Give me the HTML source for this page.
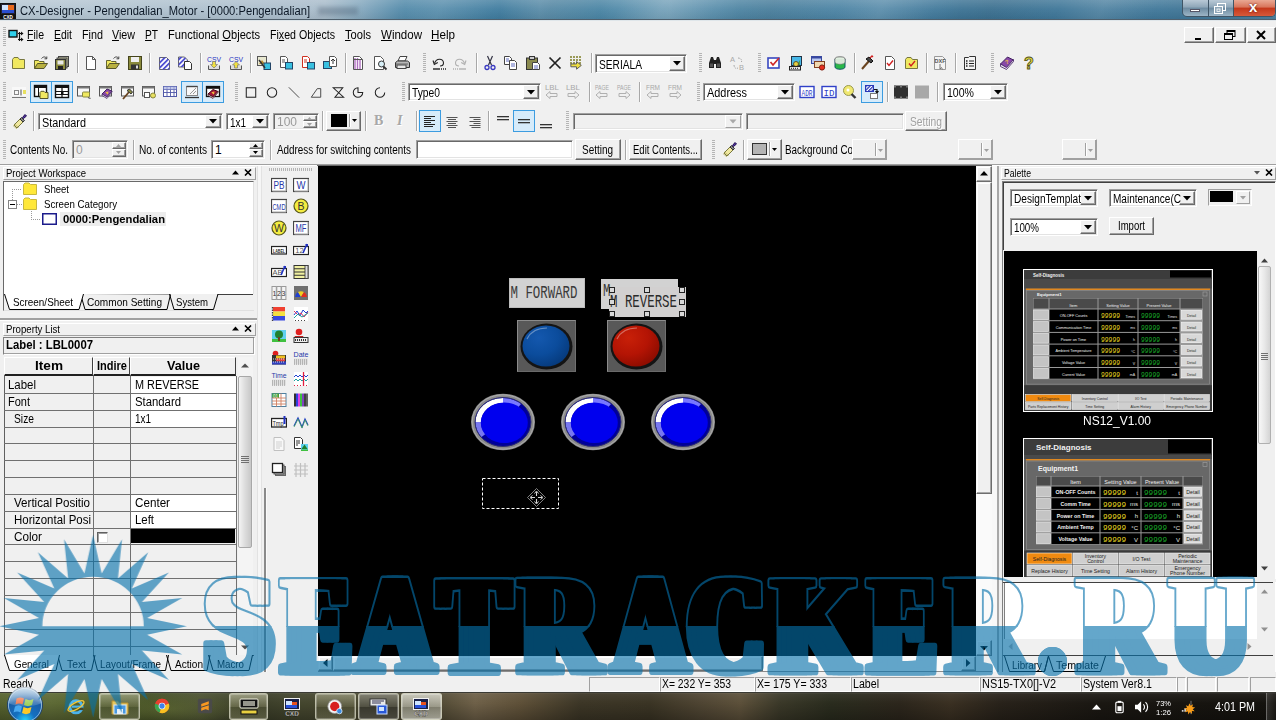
<!DOCTYPE html>
<html><head><meta charset="utf-8"><title>CX-Designer - Pengendalian_Motor</title>
<style>
html,body{margin:0;padding:0;}
body{width:1276px;height:720px;overflow:hidden;position:relative;background:#f0f0f0;font-family:"Liberation Sans",sans-serif;font-size:11px;}
div,svg,span.t{position:absolute;box-sizing:border-box;}
span.t{white-space:nowrap;transform-origin:0 50%;}
u{text-decoration:underline;text-underline-offset:1px;}
.sunk{border:1px solid;border-color:#a0a0a0 #fff #fff #a0a0a0;}
.sunk2{border:1px solid;border-color:#a0a0a0 #fff #fff #a0a0a0;box-shadow:inset 1px 1px 0 #696969,inset -1px -1px 0 #e3e3e3;}
.raised{border:1px solid;border-color:#fff #a0a0a0 #a0a0a0 #fff;background:#f0f0f0;}
.btn{border:1px solid;border-color:#fff #696969 #696969 #fff;box-shadow:inset -1px -1px 0 #a0a0a0;background:#f0f0f0;}
.hl{border:1px solid #3c9ce0;background:#d6ebfa;}
.sep{width:1px;background:#a8a8a8;box-shadow:1px 0 0 #fff;}
.grip{width:3px;background:repeating-linear-gradient(to bottom,#b4b4b4 0,#b4b4b4 1px,transparent 1px,transparent 2px);}
.gripH{height:3px;background:repeating-linear-gradient(to right,#b4b4b4 0,#b4b4b4 1px,transparent 1px,transparent 2px);}

</style></head>
<body>
<!-- title bar -->
<div style="left:0px;top:0px;width:1276px;height:20px;background:linear-gradient(to right,#b7c8d4 0,#a9bccb 325px,#86a9bf 360px,#4f88a8 405px,#3f7c9f 500px,#5f93b0 540px,#4a86a6 600px,#6a9ab4 670px,#4f87a6 740px,#4a82a3 880px,#3d7597 960px,#3f7799 1180px,#4c7f9e 1276px);"></div>
<div style="left:0px;top:0px;width:1276px;height:20px;background:linear-gradient(to bottom,rgba(255,255,255,.18) 0,rgba(255,255,255,.05) 45%,rgba(0,0,0,.06) 100%);"></div>
<div style="left:400px;top:0px;width:780px;height:20px;background:repeating-linear-gradient(115deg,rgba(255,255,255,0) 0,rgba(255,255,255,.10) 40px,rgba(255,255,255,0) 90px,rgba(0,0,0,.05) 140px,rgba(255,255,255,0) 200px);"></div>
<div style="left:0px;top:19px;width:1276px;height:1px;background:#4f5f6c;"></div>
<div style="left:0px;top:20px;width:1276px;height:1px;background:#dfe6ea;"></div>
<div style="left:318px;top:7px;width:40px;height:8px;background:rgba(70,90,110,.35);filter:blur(2px);"></div>
<svg style="left:0px;top:3px;" width="16" height="16" viewBox="0 0 16 16"><rect x="0.5" y="0.5" width="15" height="11" fill="#223" stroke="#111"/><rect x="2" y="2" width="6" height="5" fill="#cfe4ff"/><rect x="8" y="2" width="6" height="5" fill="#e96a1c"/><rect x="2" y="7" width="12" height="3" fill="#2b4fd0"/><rect x="0" y="12" width="16" height="4" fill="#111"/><text x="8" y="15.6" font-size="4.6" font-weight="bold" fill="#fff" text-anchor="middle" font-family="Liberation Sans,sans-serif">CXD</text></svg>
<span class="t" style="left:20px;top:2.5px;font-size:12px;line-height:16px;color:#0c1826;transform:scaleX(0.9330);">CX-Designer - Pengendalian_Motor - [0000:Pengendalian]</span>
<div style="left:1182px;top:0px;width:94px;height:17px;border-radius:0 0 5px 5px;border:1px solid #3f5566;border-top:none;background:linear-gradient(to bottom,#b9c9d6 0,#8ea6b8 45%,#6c8aa0 50%,#9db5c6 100%);"></div>
<div style="left:1208px;top:0px;width:1px;height:16px;background:#3f5566;"></div>
<div style="left:1233px;top:0px;width:1px;height:16px;background:#3f5566;"></div>
<div style="left:1234px;top:0px;width:41px;height:16px;border-radius:0 0 4px 0;background:linear-gradient(to bottom,#e9a893 0,#d8745a 45%,#c4371a 50%,#d6593a 100%);"></div>
<div style="left:1190px;top:9px;width:10px;height:3px;background:#fff;border:1px solid #556;box-sizing:border-box;"></div>
<svg style="left:1214px;top:3px;" width="12" height="11" viewBox="0 0 12 11"><rect x="3.5" y="0.5" width="8" height="7" fill="none" stroke="#fff"/><rect x="0.5" y="3.5" width="8" height="7" fill="#8ea6b8" stroke="#fff"/><rect x="3" y="6" width="3" height="2.4" fill="none" stroke="#fff" stroke-width=".8"/></svg>
<span class="t" style="left:1249px;top:-1px;font-size:15px;line-height:16px;color:#fff;font-weight:bold;text-shadow:0 0 2px #400;">x</span>
<!-- menu bar -->
<div style="left:0px;top:21px;width:1276px;height:28px;background:#f0f0f0;"></div>
<div class="grip" style="left:3px;top:27px;width:3px;height:20px;"></div>
<svg style="left:8px;top:29px;" width="17" height="14" viewBox="0 0 17 14"><rect x="1" y="1.5" width="8" height="6.5" fill="#2fd0ec" stroke="#111" stroke-width="1.4"/><path d="M10 4.5h3M10 10.5h3M11.5 3v9" stroke="#111" stroke-width="1.2" fill="none"/><path d="M13 2.5l2.5 2-2.5 2zM13 8.5l2.5 2-2.5 2z" fill="#111"/></svg>
<span class="t" style="left:27px;top:27px;font-size:12px;line-height:16px;color:#000;transform:scaleX(0.8792);"><u>F</u>ile</span>
<span class="t" style="left:54px;top:27px;font-size:12px;line-height:16px;color:#000;transform:scaleX(0.8705);"><u>E</u>dit</span>
<span class="t" style="left:82px;top:27px;font-size:12px;line-height:16px;color:#000;transform:scaleX(0.8997);">F<u>i</u>nd</span>
<span class="t" style="left:112px;top:27px;font-size:12px;line-height:16px;color:#000;transform:scaleX(0.8917);"><u>V</u>iew</span>
<span class="t" style="left:145px;top:27px;font-size:12px;line-height:16px;color:#000;transform:scaleX(0.8478);"><u>P</u>T</span>
<span class="t" style="left:168px;top:27px;font-size:12px;line-height:16px;color:#000;transform:scaleX(0.9258);">Functional <u>O</u>bjects</span>
<span class="t" style="left:270px;top:27px;font-size:12px;line-height:16px;color:#000;transform:scaleX(0.8861);">Fi<u>x</u>ed Objects</span>
<span class="t" style="left:344.5px;top:27px;font-size:12px;line-height:16px;color:#000;transform:scaleX(0.9282);"><u>T</u>ools</span>
<span class="t" style="left:381px;top:27px;font-size:12px;line-height:16px;color:#000;transform:scaleX(0.9607);"><u>W</u>indow</span>
<span class="t" style="left:431px;top:27px;font-size:12px;line-height:16px;color:#000;transform:scaleX(0.9725);"><u>H</u>elp</span>
<div class="btn" style="left:1184px;top:27px;width:30px;height:16px;"></div>
<div class="btn" style="left:1215px;top:27px;width:31px;height:16px;"></div>
<div class="btn" style="left:1247px;top:27px;width:29px;height:16px;"></div>
<div style="left:1195px;top:38px;width:6px;height:2px;background:#000;"></div>
<svg style="left:1224px;top:30px;" width="12" height="10" viewBox="0 0 12 10"><rect x="3" y="0.5" width="8" height="6" fill="none" stroke="#000"/><rect x="3" y="0" width="8" height="2" fill="#000"/><rect x="0.5" y="3.5" width="8" height="6" fill="#f0f0f0" stroke="#000"/><rect x="0" y="3" width="9" height="2" fill="#000"/></svg>
<svg style="left:1256px;top:30px;" width="10" height="10" viewBox="0 0 10 10"><path d="M1 1l8 8M9 1l-8 8" stroke="#000" stroke-width="2"/></svg>
<!-- toolbar row 1 -->
<div class="grip" style="left:3px;top:53px;width:3px;height:20px;"></div>
<svg style="left:11px;top:55px;" width="16" height="16" viewBox="0 0 16 16"><path d="M1.5 13.5v-9l1.5-2h4l1.5 2h5v9z" fill="#f0e860" stroke="#777740" /></svg>
<svg style="left:33px;top:55px;" width="16" height="16" viewBox="0 0 16 16"><path d="M1.5 13.5v-8h4l1 1h4.5v2" fill="#f0e860" stroke="#666630"/><path d="M1.5 13.5l3-5h10l-3.5 5z" fill="#b8b040" stroke="#55552a"/><path d="M8.5 3.5c2-2.2 4-2 5 0M13.8 1.5v2.3h-2.3" fill="none" stroke="#444"/></svg>
<svg style="left:54px;top:55px;" width="16" height="16" viewBox="0 0 16 16"><rect x="4.5" y="1.5" width="10" height="10" fill="#c8c8a8" stroke="#444"/><rect x="3" y="3" width="10" height="10" fill="#b0b090" stroke="#444"/><rect x="1.5" y="4.5" width="10" height="10" fill="#8a8a3c" stroke="#333"/><rect x="3.5" y="5.5" width="6" height="4" fill="#e8e8e8"/><rect x="4" y="11" width="5" height="3.5" fill="#222"/></svg>
<svg style="left:83px;top:55px;" width="16" height="16" viewBox="0 0 16 16"><path d="M3.5 1.5h6l3 3v10h-9z" fill="#fff" stroke="#555"/><path d="M9.5 1.5v3h3" fill="none" stroke="#555"/></svg>
<svg style="left:105px;top:55px;" width="16" height="16" viewBox="0 0 16 16"><path d="M1.5 13.5v-8h4l1 1h4.5v2" fill="#f0e860" stroke="#666630"/><path d="M1.5 13.5l3-5h10l-3.5 5z" fill="#b8b040" stroke="#55552a"/><path d="M8.5 3.5c2-2.2 4-2 5 0M13.8 1.5v2.3h-2.3" fill="none" stroke="#444"/></svg>
<svg style="left:127px;top:55px;" width="16" height="16" viewBox="0 0 16 16"><rect x="1.5" y="1.5" width="13" height="13" fill="#8a8a3c" stroke="#44441c"/><rect x="4" y="2" width="8" height="5" fill="#f0f0f0"/><rect x="4" y="9.5" width="8" height="5" fill="#333"/><rect x="9" y="10.5" width="2" height="3" fill="#ddd"/></svg>
<svg style="left:156px;top:55px;" width="16" height="16" viewBox="0 0 16 16"><defs><pattern id="hs" width="3.600" height="3.600" patternUnits="userSpaceOnUse" patternTransform="rotate(45)"><rect width="1.700" height="3.600" fill="#4a4ad0"/></pattern></defs><path d="M3.5 2.5h7l3 3v9h-10z" fill="#fff" stroke="#555" stroke-width=".9"/><path d="M3.5 2.5h7l3 3v9h-10z" fill="url(#hs)"/></svg>
<svg style="left:177px;top:55px;" width="16" height="16" viewBox="0 0 16 16"><defs><pattern id="hs" width="3.600" height="3.600" patternUnits="userSpaceOnUse" patternTransform="rotate(45)"><rect width="1.700" height="3.600" fill="#4a4ad0"/></pattern></defs><path d="M1.5 2.0h6l3 3v7h-9z" fill="#fff" stroke="#555" stroke-width=".9"/><path d="M1.5 2.0h6l3 3v7h-9z" fill="url(#hs)"/><path d="M7.5 6.5h5l2 2v6h-7z" fill="#fff" stroke="#333"/></svg>
<svg style="left:206px;top:55px;" width="16" height="16" viewBox="0 0 16 16"><text x="8" y="6.500" font-size="7.500" fill="#2030c0" text-anchor="middle" font-family="Liberation Sans,sans-serif" textLength="14" lengthAdjust="spacingAndGlyphs">CSV</text><path d="M2.5 10.5v4h11v-4" fill="#ddd" stroke="#555"/><path d="M6.500 6.500h3v3h2l-3.500 3.500-3.500-3.500h2z" fill="#f0e040" stroke="#777" stroke-width=".7"/></svg>
<svg style="left:228px;top:55px;" width="16" height="16" viewBox="0 0 16 16"><text x="8" y="6.500" font-size="7.500" fill="#2030c0" text-anchor="middle" font-family="Liberation Sans,sans-serif" textLength="14" lengthAdjust="spacingAndGlyphs">CSV</text><path d="M2.5 10.5v4h11v-4" fill="#ddd" stroke="#555"/><path d="M6.500 13h3v-3h2l-3.500-3.500-3.500 3.500h2z" fill="#f0e040" stroke="#777" stroke-width=".7"/></svg>
<svg style="left:256px;top:55px;" width="16" height="16" viewBox="0 0 16 16"><rect x="1.5" y="1.5" width="9" height="9" fill="#e8e8d0" stroke="#555"/><path d="M3 9l3-4 3 4z" fill="#c09030"/><rect x="8" y="8" width="6.5" height="6.5" fill="#38c0e0" stroke="#246"/><path d="M3 5l6 8" stroke="#333" stroke-width="1.6"/></svg>
<svg style="left:278px;top:55px;" width="16" height="16" viewBox="0 0 16 16"><path d="M2.5 1.5h5l2 2v9h-7z" fill="#fff" stroke="#555"/><path d="M4 5h3M4 7h3" stroke="#555"/><rect x="7.500" y="7.500" width="7" height="6.500" fill="#38c0e0" stroke="#246"/></svg>
<svg style="left:300px;top:55px;" width="16" height="16" viewBox="0 0 16 16"><path d="M2.5 1.5h5l2 2v9h-7z" fill="#fff" stroke="#d03020"/><path d="M4 5h3M4 7h3" stroke="#d03020"/><rect x="7.500" y="7.500" width="7" height="6.500" fill="#38c0e0" stroke="#246"/></svg>
<svg style="left:322px;top:55px;" width="16" height="16" viewBox="0 0 16 16"><rect x="1.5" y="6.500" width="8" height="7" fill="#38c0e0" stroke="#246"/><path d="M7.5 1.5h5l2 2v8h-7z" fill="#fff" stroke="#555"/><path d="M11 9v-5M9 6l2-2 2 2" fill="none" stroke="#333"/></svg>
<svg style="left:350px;top:55px;" width="16" height="16" viewBox="0 0 16 16"><path d="M3.5 1.5h6l3 3v10h-9z" fill="#fff" stroke="#555"/><path d="M5 3v11M7.5 3v11M10 5v9" stroke="#b070c0" stroke-width="1.4"/><path d="M3.5 4.500h9" stroke="#555"/></svg>
<svg style="left:372px;top:55px;" width="16" height="16" viewBox="0 0 16 16"><path d="M2.5 1.5h6l3 3v10h-9z" fill="#fff" stroke="#555"/><circle cx="9.5" cy="9" r="3" fill="#d8f0f8" stroke="#333"/><path d="M11.5 11.500l3 3" stroke="#333" stroke-width="1.800"/></svg>
<svg style="left:394px;top:55px;" width="16" height="16" viewBox="0 0 16 16"><path d="M4 6l2-4.500h7l-2 4.500z" fill="#fff" stroke="#444"/><path d="M1.5 7.500l2-1.500h10l2 1.500v5h-14z" fill="#b8b8b8" stroke="#333"/><rect x="3" y="10" width="9" height="3.500" fill="#e8e8e8" stroke="#444"/><path d="M2 9h12" stroke="#666"/></svg>
<svg style="left:431px;top:55px;" width="16" height="16" viewBox="0 0 16 16"><path d="M3.500 8.500c1.500-5.500 9-5.500 9-.5c0 2-1.500 3-3.500 3" fill="none" stroke="#222" stroke-width="1.100"/><path d="M2 5.500l1.300 4 3.500-2" fill="none" stroke="#222" stroke-width="1.100"/><path d="M2 14h7" stroke="#222" stroke-width="1.400"/><path d="M10 14h5" stroke="#222" stroke-width="1.400" stroke-dasharray="1 1"/></svg>
<svg style="left:452px;top:55px;" width="16" height="16" viewBox="0 0 16 16"><path d="M12.500 8.500c-1.500-5.500-9-5.500-9-.5c0 2 1.500 3 3.500 3" fill="none" stroke="#b0b0b0" stroke-width="1.100"/><path d="M14 5.500l-1.300 4-3.500-2" fill="none" stroke="#b0b0b0" stroke-width="1.100"/><path d="M7 14h7" stroke="#b0b0b0" stroke-width="1.400"/><path d="M1 14h5" stroke="#b0b0b0" stroke-width="1.400" stroke-dasharray="1 1"/></svg>
<svg style="left:482px;top:55px;" width="16" height="16" viewBox="0 0 16 16"><path d="M5.500 1l4 9M10.500 1l-4 9" stroke="#334" stroke-width="1.200"/><circle cx="5" cy="12.500" r="2" fill="none" stroke="#3838c0" stroke-width="1.300"/><circle cx="11" cy="12.500" r="2" fill="none" stroke="#3838c0" stroke-width="1.300"/></svg>
<svg style="left:503px;top:55px;" width="16" height="16" viewBox="0 0 16 16"><path d="M1.500 1.500h5l2 2v6h-7z" fill="#fff" stroke="#444"/><path d="M6.500 5.500h5l2 2v7h-7z" fill="#fff" stroke="#444"/><path d="M8 9h4M8 11h4M3 4h3M3 6h3" stroke="#3848b0" stroke-width=".8"/></svg>
<svg style="left:525px;top:55px;" width="16" height="16" viewBox="0 0 16 16"><rect x="1.500" y="3" width="11" height="11.500" fill="#8a8a50" stroke="#333"/><rect x="4.500" y="1.500" width="5" height="3" fill="#ccc" stroke="#333"/><path d="M7.500 7.500h5l2 2v5h-7z" fill="#fff" stroke="#444"/><path d="M9 11h4M9 13h4" stroke="#3848b0" stroke-width=".8"/></svg>
<svg style="left:547px;top:55px;" width="16" height="16" viewBox="0 0 16 16"><path d="M2.500 2.500l11 11M13.500 2.500l-11 11" stroke="#222" stroke-width="1.700"/></svg>
<svg style="left:568px;top:55px;" width="16" height="16" viewBox="0 0 16 16"><g fill="#9a9a58"><rect x="2" y="1" width="2" height="2"/><rect x="2" y="4" width="2" height="2"/><rect x="2" y="7" width="2" height="2"/><rect x="5" y="1" width="2" height="2"/><rect x="5" y="4" width="2" height="2"/><rect x="5" y="7" width="2" height="2"/><rect x="8" y="1" width="2" height="2"/><rect x="8" y="4" width="2" height="2"/><rect x="8" y="7" width="2" height="2"/><rect x="11" y="1" width="2" height="2"/><rect x="11" y="4" width="2" height="2"/><rect x="11" y="7" width="2" height="2"/></g><path d="M3 11h6v-2.500l5 4-5 4v-2.500h-6z" transform="translate(0,-1.500) scale(.95)" fill="#f0e040" stroke="#555"/></svg>
<svg style="left:707px;top:55px;" width="16" height="16" viewBox="0 0 16 16"><path d="M2 13v-5l2-6h2l1 3h2l1-3h2l2 6v5h-5v-4h-2v4z" fill="#222"/><rect x="3" y="8.500" width="3" height="3.500" fill="#555"/><rect x="10" y="8.500" width="3" height="3.500" fill="#555"/></svg>
<svg style="left:729px;top:55px;" width="16" height="16" viewBox="0 0 16 16"><text x="1" y="7" font-size="7.500" fill="#a8a8a8" font-family="Liberation Sans,sans-serif">A</text><text x="10" y="15" font-size="7.500" fill="#a8a8a8" font-family="Liberation Sans,sans-serif">B</text><path d="M5 10c0 3 2 4 4 3M9 3c3 0 4 2 3.500 4" fill="none" stroke="#a8a8a8" stroke-dasharray="1.500 1"/></svg>
<svg style="left:766px;top:55px;" width="16" height="16" viewBox="0 0 16 16"><rect x="2" y="3" width="11" height="10" fill="#fff" stroke="#3848c0" stroke-width="1.600"/><path d="M4.500 7l2.500 3 6-7" fill="none" stroke="#d02828" stroke-width="1.700"/></svg>
<svg style="left:788px;top:55px;" width="16" height="16" viewBox="0 0 16 16"><rect x="3.500" y="1.500" width="10" height="9" fill="#48b8e8" stroke="#234"/><path d="M5 10l3-4 2 2 2-3v5z" fill="#48a048"/><circle cx="8" cy="9" r="2.500" fill="#e8d040" stroke="#553"/><rect x="1.500" y="11.500" width="11" height="3.500" fill="#e8e8e8" stroke="#222"/><path d="M3 13.300h8" stroke="#222" stroke-dasharray="1 1"/></svg>
<svg style="left:810px;top:55px;" width="16" height="16" viewBox="0 0 16 16"><rect x="1.500" y="1.500" width="10" height="7" fill="#b8c8f0" stroke="#3848a0"/><rect x="1.500" y="1.500" width="10" height="2" fill="#3848a0"/><rect x="4.500" y="6.500" width="10" height="6" fill="#f0d8b0" stroke="#804020"/><circle cx="12" cy="12.500" r="2.600" fill="#e83020" stroke="#802010"/></svg>
<svg style="left:832px;top:55px;" width="16" height="16" viewBox="0 0 16 16"><path d="M3 4v8c0 3 10 3 10 0v-8" fill="#28b848" stroke="#156"/><ellipse cx="8" cy="4" rx="5" ry="2.200" fill="#e0f0e0" stroke="#777"/><path d="M3 4v3c0 3 10 3 10 0v-3" fill="#d8e8d8" stroke="#777" stroke-width=".6"/></svg>
<svg style="left:860px;top:55px;" width="16" height="16" viewBox="0 0 16 16"><path d="M2 14l7-8" stroke="#6a4420" stroke-width="2"/><path d="M6 4l3-2 4 4-2 2z" fill="#444" stroke="#111"/><path d="M10 3l2-2 1 1" fill="none" stroke="#d02020" stroke-width="1.300"/></svg>
<svg style="left:882px;top:55px;" width="16" height="16" viewBox="0 0 16 16"><path d="M3.500 1.500h6l3 3v10h-9z" fill="#fff" stroke="#555"/><path d="M5 8l2 2.500 4-5" fill="none" stroke="#d02020" stroke-width="1.400"/></svg>
<svg style="left:904px;top:55px;" width="16" height="16" viewBox="0 0 16 16"><path d="M1.5 13.5v-9l1.5-2h4l1.5 2h5v9z" fill="#f0e860" stroke="#777740" /><path d="M5 8.500l2 2.500 4-5" fill="none" stroke="#d02020" stroke-width="1.400"/></svg>
<svg style="left:932px;top:55px;" width="16" height="16" viewBox="0 0 16 16"><path d="M2.500 1.500h8l3 3v10h-11z" fill="#f4f4f4" stroke="#999"/><text x="8" y="8" font-size="5.500" font-weight="bold" fill="#555" text-anchor="middle" font-family="Liberation Sans,sans-serif">DXF</text><path d="M8 9v5l1.500-1.500 1 2" fill="none" stroke="#777"/></svg>
<svg style="left:962px;top:55px;" width="16" height="16" viewBox="0 0 16 16"><path d="M2.500 2.500h4l1-1h6v13h-11z" fill="#f4f4f4" stroke="#333"/><path d="M4 6h1.500M4 8.500h1.500M4 11h1.500" stroke="#222" stroke-width="1.400"/><path d="M7 6h5M7 8.500h5M7 11h5" stroke="#222"/></svg>
<svg style="left:999px;top:55px;" width="16" height="16" viewBox="0 0 16 16"><path d="M1.500 9l7-7 6 3-7 8z" fill="#8848a8" stroke="#402060"/><path d="M1.500 9v2.500l6 3 7-8v-2l-7 8z" fill="#e8e0f0" stroke="#402060" stroke-width=".8"/><text x="8.500" y="9" font-size="6" font-weight="bold" fill="#f0c040" text-anchor="middle" font-family="Liberation Sans,sans-serif" transform="rotate(-20 8 8)">?</text></svg>
<svg style="left:1021px;top:55px;" width="16" height="16" viewBox="0 0 16 16"><text x="8" y="13.500" font-size="16" font-weight="bold" fill="#e8e040" stroke="#55551c" stroke-width=".9" text-anchor="middle" font-family="Liberation Sans,sans-serif">?</text></svg>
<div class="sep" style="left:77px;top:53px;width:1px;height:20px;"></div>
<div class="sep" style="left:149px;top:53px;width:1px;height:20px;"></div>
<div class="sep" style="left:200px;top:53px;width:1px;height:20px;"></div>
<div class="sep" style="left:250px;top:53px;width:1px;height:20px;"></div>
<div class="sep" style="left:345px;top:53px;width:1px;height:20px;"></div>
<div class="sep" style="left:476px;top:53px;width:1px;height:20px;"></div>
<div class="sep" style="left:591px;top:53px;width:1px;height:20px;"></div>
<div class="sep" style="left:854px;top:53px;width:1px;height:20px;"></div>
<div class="sep" style="left:926px;top:53px;width:1px;height:20px;"></div>
<div class="sep" style="left:955px;top:53px;width:1px;height:20px;"></div>
<div class="grip" style="left:423px;top:53px;width:3px;height:20px;"></div>
<div class="grip" style="left:699px;top:53px;width:3px;height:20px;"></div>
<div class="grip" style="left:758px;top:53px;width:3px;height:20px;"></div>
<div class="grip" style="left:991px;top:53px;width:3px;height:20px;"></div>
<div class="sunk2" style="left:595px;top:54px;width:92px;height:19px;background:#fff;"></div>
<div class="btn" style="left:669px;top:56px;width:16px;height:15px;"></div>
<svg style="left:673px;top:61px;" width="8" height="5" viewBox="0 0 8 5"><path d="M0 0h8l-4 4.500z" fill="#000"/></svg>
<span class="t" style="left:599px;top:57.5px;font-size:12px;line-height:15px;color:#000;transform:scaleX(0.8483);">SERIALA</span>
<!-- toolbar row 2 -->
<div class="grip" style="left:3px;top:82px;width:3px;height:20px;"></div>
<div class="hl" style="left:30px;top:81px;width:22px;height:22px;"></div>
<div class="hl" style="left:51px;top:81px;width:22px;height:22px;"></div>
<div class="hl" style="left:181px;top:81px;width:22px;height:22px;"></div>
<div class="hl" style="left:202px;top:81px;width:22px;height:22px;"></div>
<div class="hl" style="left:861px;top:81px;width:22px;height:22px;"></div>
<svg style="left:11px;top:84px;" width="16" height="16" viewBox="0 0 16 16"><rect x="1" y="3" width="14" height="9" fill="#f8f8f8"/><rect x="3.500" y="6.500" width="4" height="4" fill="none" stroke="#888"/><path d="M10 5.500v6" stroke="#888" stroke-width="1.500"/><rect x="12" y="6" width="3" height="4" fill="#e8e060"/><path d="M1 13.500h14" stroke="#777"/></svg>
<svg style="left:33px;top:84px;" width="16" height="16" viewBox="0 0 16 16"><rect x="1.500" y="1.500" width="12" height="11" fill="#fff" stroke="#111" stroke-width="1.400"/><rect x="1.500" y="1.500" width="12" height="2.500" fill="#111"/><path d="M5.500 4v8" stroke="#111"/><path d="M7 14.500v-6l1-1.200h3l1 1.200h3v6z" fill="#f0e860" stroke="#55552a"/></svg>
<svg style="left:54px;top:84px;" width="16" height="16" viewBox="0 0 16 16"><rect x="1.500" y="1.500" width="13" height="12" fill="#fff" stroke="#111" stroke-width="1.400"/><rect x="1.500" y="1.500" width="13" height="2.500" fill="#111"/><path d="M1.500 7.500h13M1.500 10.500h13M8 4v9.500" stroke="#111" stroke-width="1.200"/><rect x="7" y="8" width="2.500" height="3" fill="#111"/></svg>
<svg style="left:76px;top:84px;" width="16" height="16" viewBox="0 0 16 16"><rect x="1.500" y="2.500" width="12" height="9.500" fill="#f8f8f8" stroke="#555"/><rect x="1.500" y="2.500" width="12" height="2" fill="#777"/><rect x="6.500" y="8" width="7" height="5" rx="1" fill="#f0e860" stroke="#888840"/><path d="M12 13.500l2.500 1" stroke="#555" stroke-width="1.300"/></svg>
<svg style="left:98px;top:84px;" width="16" height="16" viewBox="0 0 16 16"><rect x="1.500" y="2.500" width="12" height="9.500" fill="#f8f8f8" stroke="#555"/><rect x="1.500" y="2.500" width="12" height="2" fill="#777"/><path d="M4 10l5-5 5 2-5 6z" fill="#8848a8" stroke="#402060"/><path d="M4 10v1.500l5 3 5-6.500v-1l-5 6z" fill="#e8e0f0" stroke="#402060" stroke-width=".7"/><path d="M10.500 8l-2 .5 1.500 1.500" fill="none" stroke="#f0c040" stroke-width="1.200"/></svg>
<svg style="left:120px;top:84px;" width="16" height="16" viewBox="0 0 16 16"><rect x="1.500" y="2.500" width="12" height="9.500" fill="#f8f8f8" stroke="#555"/><rect x="1.500" y="2.500" width="12" height="2" fill="#777"/><path d="M3 15l6-7" stroke="#6a4420" stroke-width="1.800"/><path d="M7 6.500l2.500-1.500 3 3-1.500 2z" fill="#8a8a40" stroke="#333"/></svg>
<svg style="left:141px;top:84px;" width="16" height="16" viewBox="0 0 16 16"><rect x="1.500" y="2.500" width="12" height="9.500" fill="#f8f8f8" stroke="#555"/><rect x="1.500" y="2.500" width="12" height="2" fill="#777"/><rect x="3.500" y="8.500" width="5" height="5" fill="#fff" stroke="#555"/><circle cx="12" cy="11.500" r="2.500" fill="#e8e060" stroke="#888840"/></svg>
<svg style="left:162px;top:84px;" width="16" height="16" viewBox="0 0 16 16"><rect x="1.500" y="2.500" width="13" height="10" fill="#fff" stroke="#5058a8"/><path d="M1.500 5.500h13M1.500 8.500h13M5 2.500v10M8.500 2.500v10M12 2.500v10" stroke="#5058a8" stroke-width=".9"/><rect x="1.500" y="2.500" width="13" height="3" fill="#a8b0e0" opacity=".7"/></svg>
<svg style="left:184px;top:84px;" width="16" height="16" viewBox="0 0 16 16"><rect x="2.500" y="2.500" width="11" height="9" fill="#f8f8f8" stroke="#888"/><path d="M2.500 2.500h11" stroke="#444" stroke-width="1.400"/><path d="M6 10l6-6M9 10l3-3" stroke="#999"/><path d="M1 13.500h14" stroke="#333" stroke-width="1.300"/></svg>
<svg style="left:205px;top:84px;" width="16" height="16" viewBox="0 0 16 16"><rect x="1.500" y="2.500" width="13" height="10" fill="#fff" stroke="#111" stroke-width="1.300"/><rect x="1.500" y="2.500" width="13" height="2.300" fill="#111"/><path d="M3 10l5-4.500 5 2-5 5.500z" fill="#a01838" stroke="#400818"/><path d="M3 10v1.500l5 3 5-6v-1l-5 5.500z" fill="#f0e0e0" stroke="#400818" stroke-width=".7"/><path d="M9.500 8l-2 .5 1.500 1.500" fill="none" stroke="#f0c040" stroke-width="1.200"/></svg>
<svg style="left:243px;top:84px;" width="16" height="16" viewBox="0 0 16 16"><g transform="translate(8 8.5) scale(.86) translate(-8 -8)"><rect x="2.500" y="2.500" width="11" height="11" fill="none" stroke="#222" stroke-width="1.200"/></g></svg>
<svg style="left:264px;top:84px;" width="16" height="16" viewBox="0 0 16 16"><g transform="translate(8 8.5) scale(.86) translate(-8 -8)"><circle cx="8" cy="8" r="5.500" fill="none" stroke="#222" stroke-width="1.200"/></g></svg>
<svg style="left:286px;top:84px;" width="16" height="16" viewBox="0 0 16 16"><g transform="translate(8 8.5) scale(.86) translate(-8 -8)"><path d="M2 2l12 12" stroke="#444" stroke-width="1.100"/></g></svg>
<svg style="left:308px;top:84px;" width="16" height="16" viewBox="0 0 16 16"><g transform="translate(8 8.5) scale(.86) translate(-8 -8)"><path d="M2.500 13.500l7-10h4v10z" fill="none" stroke="#444" stroke-width="1.100"/></g></svg>
<svg style="left:330px;top:84px;" width="16" height="16" viewBox="0 0 16 16"><g transform="translate(8 8.5) scale(.86) translate(-8 -8)"><path d="M2.500 2.500h11l-9 11h10z" fill="none" stroke="#222" stroke-width="1.200"/></g></svg>
<svg style="left:350px;top:84px;" width="16" height="16" viewBox="0 0 16 16"><g transform="translate(8 8.5) scale(.86) translate(-8 -8)"><path d="M8 8v-5.500a5.500 5.500 0 1 0 5.500 5.500z" fill="none" stroke="#222" stroke-width="1.200"/></g></svg>
<svg style="left:372px;top:84px;" width="16" height="16" viewBox="0 0 16 16"><g transform="translate(8 8.5) scale(.86) translate(-8 -8)"><path d="M8 2.500a5.500 5.500 0 1 0 5.500 5.500" fill="none" stroke="#222" stroke-width="1.200"/></g></svg>
<svg style="left:544px;top:84px;" width="16" height="16" viewBox="0 0 16 16"><text x="8" y="5.500" font-size="6.500" fill="#a8a8a8" text-anchor="middle" font-family="Liberation Sans,sans-serif" textLength="14" lengthAdjust="spacingAndGlyphs">LBL</text><path d="M2 11l4-3.500v2h7v3h-7v2z" fill="none" stroke="#b0b0b0"/></svg>
<svg style="left:565px;top:84px;" width="16" height="16" viewBox="0 0 16 16"><text x="8" y="5.500" font-size="6.500" fill="#a8a8a8" text-anchor="middle" font-family="Liberation Sans,sans-serif" textLength="14" lengthAdjust="spacingAndGlyphs">LBL</text><path d="M14 11l-4-3.500v2h-7v3h7v2z" fill="none" stroke="#b0b0b0"/></svg>
<svg style="left:594px;top:84px;" width="16" height="16" viewBox="0 0 16 16"><text x="8" y="5.500" font-size="6.500" fill="#a8a8a8" text-anchor="middle" font-family="Liberation Sans,sans-serif" textLength="14" lengthAdjust="spacingAndGlyphs">PAGE</text><path d="M2 11l4-3.500v2h7v3h-7v2z" fill="none" stroke="#b0b0b0"/></svg>
<svg style="left:616px;top:84px;" width="16" height="16" viewBox="0 0 16 16"><text x="8" y="5.500" font-size="6.500" fill="#a8a8a8" text-anchor="middle" font-family="Liberation Sans,sans-serif" textLength="14" lengthAdjust="spacingAndGlyphs">PAGE</text><path d="M14 11l-4-3.500v2h-7v3h7v2z" fill="none" stroke="#b0b0b0"/></svg>
<svg style="left:645px;top:84px;" width="16" height="16" viewBox="0 0 16 16"><text x="8" y="5.500" font-size="6.500" fill="#a8a8a8" text-anchor="middle" font-family="Liberation Sans,sans-serif" textLength="14" lengthAdjust="spacingAndGlyphs">FRM</text><path d="M2 11l4-3.500v2h7v3h-7v2z" fill="none" stroke="#b0b0b0"/></svg>
<svg style="left:667px;top:84px;" width="16" height="16" viewBox="0 0 16 16"><text x="8" y="5.500" font-size="6.500" fill="#a8a8a8" text-anchor="middle" font-family="Liberation Sans,sans-serif" textLength="14" lengthAdjust="spacingAndGlyphs">FRM</text><path d="M14 11l-4-3.500v2h-7v3h7v2z" fill="none" stroke="#b0b0b0"/></svg>
<svg style="left:799px;top:84px;" width="16" height="16" viewBox="0 0 16 16"><rect x="1" y="2.500" width="14" height="11" fill="#fff" stroke="#3040c8" stroke-width="1.400"/><text x="8" y="11.500" font-size="8.500" fill="#3040c8" text-anchor="middle" font-family="Liberation Mono,monospace" textLength="11" lengthAdjust="spacingAndGlyphs">ADR</text></svg>
<svg style="left:821px;top:84px;" width="16" height="16" viewBox="0 0 16 16"><rect x="1" y="2.500" width="14" height="11" fill="#fff" stroke="#3040c8" stroke-width="1.400"/><text x="8" y="11.500" font-size="8.500" fill="#3040c8" text-anchor="middle" font-family="Liberation Mono,monospace" textLength="11" lengthAdjust="spacingAndGlyphs">ID</text></svg>
<svg style="left:842px;top:84px;" width="16" height="16" viewBox="0 0 16 16"><circle cx="6.500" cy="6.500" r="5" fill="#f0e870" stroke="#999950"/><path d="M9.500 10l4 4" stroke="#333" stroke-width="2.400"/><circle cx="6" cy="6" r="1.500" fill="#fff"/></svg>
<svg style="left:864px;top:84px;" width="16" height="16" viewBox="0 0 16 16"><defs><pattern id="hs2" width="2.500" height="2.500" patternUnits="userSpaceOnUse" patternTransform="rotate(45)"><rect width="1.300" height="2.500" fill="#2838b8"/></pattern></defs><rect x="1.500" y="1.500" width="8" height="6" fill="#fff" stroke="#2838b8"/><rect x="1.500" y="1.500" width="8" height="6" fill="url(#hs2)"/><path d="M10 5.500h3v3M11.500 7l1.500 2 1.500-2" fill="none" stroke="#111" stroke-width="1.200"/><rect x="6.500" y="9.500" width="7" height="5" fill="#fff" stroke="#777"/></svg>
<svg style="left:893px;top:84px;" width="16" height="16" viewBox="0 0 16 16"><rect x="1" y="1.500" width="14" height="13" fill="#303030"/><g fill="#777"><rect x="1" y="1.500" width="2" height="2"/><rect x="13" y="1.500" width="2" height="2"/><rect x="1" y="12.500" width="2" height="2"/><rect x="13" y="12.500" width="2" height="2"/><rect x="7" y="1.500" width="2" height="2"/><rect x="7" y="12.500" width="2" height="2"/></g></svg>
<svg style="left:914px;top:84px;" width="16" height="16" viewBox="0 0 16 16"><rect x="1" y="1.500" width="14" height="13" fill="#a8a8a8"/></svg>
<div class="grip" style="left:235px;top:82px;width:3px;height:20px;"></div>
<div class="grip" style="left:402px;top:82px;width:3px;height:20px;"></div>
<div class="grip" style="left:697px;top:82px;width:3px;height:20px;"></div>
<div class="sep" style="left:589px;top:82px;width:1px;height:20px;"></div>
<div class="sep" style="left:639px;top:82px;width:1px;height:20px;"></div>
<div class="sep" style="left:887px;top:82px;width:1px;height:20px;"></div>
<div class="sep" style="left:937px;top:82px;width:1px;height:20px;"></div>
<div class="sunk2" style="left:408px;top:83px;width:133px;height:18px;background:#fff;"></div>
<div class="btn" style="left:523px;top:85px;width:16px;height:14px;"></div>
<svg style="left:527px;top:90px;" width="8" height="5" viewBox="0 0 8 5"><path d="M0 0h8l-4 4.500z" fill="#000"/></svg>
<span class="t" style="left:412px;top:85.5px;font-size:12px;line-height:15px;color:#000;transform:scaleX(0.8566);">Type0</span>
<div class="sunk2" style="left:703px;top:83px;width:92px;height:18px;background:#fff;"></div>
<div class="btn" style="left:777px;top:85px;width:16px;height:14px;"></div>
<svg style="left:781px;top:90px;" width="8" height="5" viewBox="0 0 8 5"><path d="M0 0h8l-4 4.500z" fill="#000"/></svg>
<span class="t" style="left:707px;top:85.5px;font-size:12px;line-height:15px;color:#000;transform:scaleX(0.9087);">Address</span>
<div class="sunk2" style="left:943px;top:83px;width:65px;height:18px;background:#fff;"></div>
<div class="btn" style="left:990px;top:85px;width:16px;height:14px;"></div>
<svg style="left:994px;top:90px;" width="8" height="5" viewBox="0 0 8 5"><path d="M0 0h8l-4 4.500z" fill="#000"/></svg>
<span class="t" style="left:947px;top:85.5px;font-size:12px;line-height:15px;color:#000;transform:scaleX(0.8798);">100%</span>
<!-- toolbar row 3 -->
<div class="grip" style="left:3px;top:111px;width:3px;height:20px;"></div>
<svg style="left:11px;top:113px;" width="16" height="16" viewBox="0 0 16 16"><path d="M3 12l6-6 3 3-6 6z" fill="#f0e8a0" stroke="#777740"/><path d="M2 12.500l4 3.500M3.500 11l4 3.500" stroke="#b8b060" stroke-width=".8"/><path d="M9 6l1.500-1.500 3 3-1.500 1.500z" fill="#888" stroke="#333"/><path d="M11.500 4.500l2.500-3 1.500 1.500-3 2.500z" fill="#5030a0" stroke="#201050"/></svg>
<div class="sep" style="left:33px;top:111px;width:1px;height:20px;"></div>
<div class="sunk2" style="left:38px;top:113px;width:185px;height:17px;background:#fff;"></div>
<div class="btn" style="left:205px;top:115px;width:16px;height:13px;"></div>
<svg style="left:209px;top:119px;" width="8" height="5" viewBox="0 0 8 5"><path d="M0 0h8l-4 4.500z" fill="#000"/></svg>
<span class="t" style="left:42px;top:115.5px;font-size:12px;line-height:15px;color:#000;transform:scaleX(0.9035);">Standard</span>
<div class="sunk2" style="left:226px;top:113px;width:44px;height:17px;background:#fff;"></div>
<div class="btn" style="left:252px;top:115px;width:16px;height:13px;"></div>
<svg style="left:256px;top:119px;" width="8" height="5" viewBox="0 0 8 5"><path d="M0 0h8l-4 4.500z" fill="#000"/></svg>
<span class="t" style="left:230px;top:115.5px;font-size:12px;line-height:15px;color:#000;transform:scaleX(0.8270);">1x1</span>
<div class="sunk2" style="left:273px;top:113px;width:46px;height:17px;background:#f0f0f0;"></div>
<span class="t" style="left:277px;top:115px;font-size:12px;line-height:15px;color:#9a9a9a;transform:scaleX(0.9990);">100</span>
<div class="btn" style="left:303px;top:115px;width:14px;height:6px;"></div>
<div class="btn" style="left:303px;top:121px;width:14px;height:7px;"></div>
<svg style="left:307px;top:117px;" width="5" height="3" viewBox="0 0 5 3"><path d="M0 3l2.500-3 2.500 3z" fill="#a0a0a0"/></svg>
<svg style="left:307px;top:123px;" width="5" height="3" viewBox="0 0 5 3"><path d="M0 0l2.500 3 2.500-3z" fill="#a0a0a0"/></svg>
<div class="sep" style="left:322px;top:111px;width:1px;height:20px;"></div>
<div class="btn" style="left:326px;top:111px;width:35px;height:20px;"></div>
<div style="left:331px;top:114px;width:16px;height:13px;background:#000;"></div>
<div style="left:349px;top:114px;width:1px;height:13px;background:#a0a0a0;box-shadow:1px 0 0 #fff;"></div>
<svg style="left:352px;top:119px;" width="5" height="3" viewBox="0 0 5 3"><path d="M0 0h5l-2.500 3z" fill="#000"/></svg>
<div class="sep" style="left:365px;top:111px;width:1px;height:20px;"></div>
<span class="t" style="left:374px;top:113px;font-size:14px;line-height:16px;color:#a8a8a8;font-weight:bold;font-family:'Liberation Serif',serif;text-shadow:1px 1px 0 #fff;">B</span>
<span class="t" style="left:397px;top:113px;font-size:14px;line-height:16px;color:#a8a8a8;font-weight:bold;font-family:'Liberation Serif',serif;font-style:italic;text-shadow:1px 1px 0 #fff;">I</span>
<div class="sep" style="left:416px;top:111px;width:1px;height:20px;"></div>
<div class="hl" style="left:419px;top:110px;width:22px;height:22px;"></div>
<div class="hl" style="left:513px;top:110px;width:22px;height:22px;"></div>
<svg style="left:422px;top:113px;" width="16" height="16" viewBox="0 0 16 16"><rect x="2" y="3" width="11" height="1" fill="#222"/><rect x="2" y="5" width="7" height="1" fill="#222"/><rect x="2" y="7" width="11" height="1" fill="#222"/><rect x="2" y="9" width="7" height="1" fill="#222"/><rect x="2" y="11" width="11" height="1" fill="#222"/><rect x="2" y="13" width="9" height="1" fill="#222"/></svg>
<svg style="left:444px;top:114px;" width="16" height="16" viewBox="0 0 16 16"><rect x="2.5" y="3" width="11" height="1" fill="#555"/><rect x="4.0" y="5" width="8" height="1" fill="#555"/><rect x="2.5" y="7" width="11" height="1" fill="#555"/><rect x="4.0" y="9" width="8" height="1" fill="#555"/><rect x="2.5" y="11" width="11" height="1" fill="#555"/><rect x="4.0" y="13" width="8" height="1" fill="#555"/></svg>
<svg style="left:467px;top:114px;" width="16" height="16" viewBox="0 0 16 16"><rect x="2.5" y="3" width="11" height="1" fill="#555"/><rect x="6.5" y="5" width="7" height="1" fill="#555"/><rect x="2.5" y="7" width="11" height="1" fill="#555"/><rect x="6.5" y="9" width="7" height="1" fill="#555"/><rect x="2.5" y="11" width="11" height="1" fill="#555"/><rect x="4.5" y="13" width="9" height="1" fill="#555"/></svg>
<div class="sep" style="left:488px;top:111px;width:1px;height:20px;"></div>
<svg style="left:495px;top:113px;" width="16" height="16" viewBox="0 0 16 16"><rect x="2" y="3" width="12" height="1.300" fill="#333"/><rect x="2" y="6" width="12" height="1.300" fill="#333"/></svg>
<svg style="left:516px;top:113px;" width="16" height="16" viewBox="0 0 16 16"><rect x="2" y="6" width="12" height="1.300" fill="#333"/><rect x="2" y="9" width="12" height="1.300" fill="#333"/></svg>
<svg style="left:538px;top:114px;" width="16" height="16" viewBox="0 0 16 16"><rect x="2" y="10" width="12" height="1.300" fill="#333"/><rect x="2" y="13" width="12" height="1.300" fill="#333"/></svg>
<div class="grip" style="left:566px;top:111px;width:3px;height:20px;"></div>
<div class="sunk2" style="left:573px;top:113px;width:170px;height:17px;background:#f0f0f0;"></div>
<div style="left:725px;top:115px;width:16px;height:13px;background:#f0f0f0;border:1px solid;border-color:#fff #a0a0a0 #a0a0a0 #fff;"></div>
<svg style="left:729px;top:119px;" width="8" height="5" viewBox="0 0 8 5"><path d="M0.500 0.500h7l-3.500 4z" fill="#a8a8a8"/></svg>
<div class="sunk2" style="left:746px;top:113px;width:158px;height:17px;background:#f0f0f0;"></div>
<div class="btn" style="left:905px;top:111px;width:42px;height:20px;"></div>
<span class="t" style="left:910px;top:115px;font-size:12px;line-height:15px;color:#a0a0a0;transform:scaleX(0.8566);text-shadow:1px 1px 0 #fff;">Setting</span>
<!-- toolbar row 4 -->
<div class="grip" style="left:3px;top:140px;width:3px;height:20px;"></div>
<span class="t" style="left:10px;top:143px;font-size:12px;line-height:15px;color:#000;transform:scaleX(0.8282);">Contents No.</span>
<div class="sunk2" style="left:72px;top:140px;width:56px;height:19px;background:#f0f0f0;"></div>
<span class="t" style="left:76px;top:143px;font-size:12px;line-height:15px;color:#9a9a9a;">0</span>
<div class="btn" style="left:112px;top:142px;width:14px;height:7px;"></div>
<div class="btn" style="left:112px;top:149px;width:14px;height:8px;"></div>
<svg style="left:116px;top:144px;" width="5" height="3" viewBox="0 0 5 3"><path d="M0 3l2.500-3 2.500 3z" fill="#a0a0a0"/></svg>
<svg style="left:116px;top:151px;" width="5" height="3" viewBox="0 0 5 3"><path d="M0 0l2.500 3 2.500-3z" fill="#a0a0a0"/></svg>
<div class="sep" style="left:133px;top:140px;width:1px;height:20px;"></div>
<span class="t" style="left:139px;top:143px;font-size:12px;line-height:15px;color:#000;transform:scaleX(0.8425);">No. of contents</span>
<div class="sunk2" style="left:211px;top:140px;width:54px;height:19px;background:#fff;"></div>
<span class="t" style="left:215px;top:143px;font-size:12px;line-height:15px;color:#000;">1</span>
<div class="btn" style="left:249px;top:142px;width:14px;height:7px;"></div>
<div class="btn" style="left:249px;top:149px;width:14px;height:8px;"></div>
<svg style="left:253px;top:144px;" width="5" height="3" viewBox="0 0 5 3"><path d="M0 3l2.500-3 2.500 3z" fill="#000"/></svg>
<svg style="left:253px;top:151px;" width="5" height="3" viewBox="0 0 5 3"><path d="M0 0l2.500 3 2.500-3z" fill="#000"/></svg>
<div class="sep" style="left:270px;top:140px;width:1px;height:20px;"></div>
<span class="t" style="left:277px;top:143px;font-size:12px;line-height:15px;color:#000;transform:scaleX(0.8234);">Address for switching contents</span>
<div class="sunk2" style="left:416px;top:140px;width:157px;height:19px;background:#fff;"></div>
<div class="btn" style="left:575px;top:139px;width:46px;height:21px;"></div>
<span class="t" style="left:582px;top:143px;font-size:12px;line-height:15px;color:#000;transform:scaleX(0.8298);">Setting</span>
<div class="sep" style="left:625px;top:140px;width:1px;height:20px;"></div>
<div class="btn" style="left:629px;top:139px;width:73px;height:21px;"></div>
<span class="t" style="left:633px;top:143px;font-size:12px;line-height:15px;color:#000;transform:scaleX(0.7923);">Edit Contents...</span>
<div class="grip" style="left:712px;top:140px;width:3px;height:20px;"></div>
<svg style="left:721px;top:141px;" width="16" height="16" viewBox="0 0 16 16"><path d="M3 12l6-6 3 3-6 6z" fill="#f0e8a0" stroke="#777740"/><path d="M2 12.500l4 3.500M3.500 11l4 3.500" stroke="#b8b060" stroke-width=".8"/><path d="M9 6l1.500-1.500 3 3-1.500 1.500z" fill="#888" stroke="#333"/><path d="M11.500 4.500l2.500-3 1.500 1.500-3 2.500z" fill="#5030a0" stroke="#201050"/></svg>
<div class="sep" style="left:743px;top:140px;width:1px;height:20px;"></div>
<div class="btn" style="left:747px;top:139px;width:35px;height:21px;"></div>
<div style="left:752px;top:143px;width:15px;height:12px;background:#b4b4b4;border:1px solid #333;"></div>
<div style="left:769px;top:142px;width:1px;height:14px;background:#a0a0a0;box-shadow:1px 0 0 #fff;"></div>
<svg style="left:772px;top:148px;" width="5" height="3" viewBox="0 0 5 3"><path d="M0 0h5l-2.500 3z" fill="#000"/></svg>
<span class="t" style="left:785px;top:143px;font-size:12px;line-height:15px;color:#000;transform:scaleX(0.8221);">Background Co</span>
<div class="btn" style="left:852px;top:139px;width:35px;height:21px;border-color:#fff #a0a0a0 #a0a0a0 #fff;"></div>
<div style="left:875px;top:143px;width:1px;height:13px;background:#a0a0a0;box-shadow:1px 0 0 #fff;"></div>
<svg style="left:878px;top:149px;" width="5" height="3" viewBox="0 0 5 3"><path d="M0 0h5l-2.500 3z" fill="#a0a0a0"/></svg>
<div class="btn" style="left:958px;top:139px;width:35px;height:21px;border-color:#fff #a0a0a0 #a0a0a0 #fff;"></div>
<div style="left:981px;top:143px;width:1px;height:13px;background:#a0a0a0;box-shadow:1px 0 0 #fff;"></div>
<svg style="left:984px;top:149px;" width="5" height="3" viewBox="0 0 5 3"><path d="M0 0h5l-2.500 3z" fill="#a0a0a0"/></svg>
<div class="btn" style="left:1062px;top:139px;width:35px;height:21px;border-color:#fff #a0a0a0 #a0a0a0 #fff;"></div>
<div style="left:1085px;top:143px;width:1px;height:13px;background:#a0a0a0;box-shadow:1px 0 0 #fff;"></div>
<svg style="left:1088px;top:149px;" width="5" height="3" viewBox="0 0 5 3"><path d="M0 0h5l-2.500 3z" fill="#a0a0a0"/></svg>
<!-- project workspace -->
<div style="left:0px;top:164px;width:1276px;height:1px;background:#a0a0a0;"></div>
<div style="left:0px;top:165px;width:1276px;height:1px;background:#fff;"></div>
<div style="left:3px;top:167px;width:253px;height:13px;border:1px solid;border-color:#fff #a0a0a0 #a0a0a0 #fff;"></div>
<span class="t" style="left:6px;top:165.5px;font-size:11px;line-height:14px;color:#000;transform:scaleX(0.8686);">Project Workspace</span>
<svg style="left:232px;top:170px;" width="7" height="5" viewBox="0 0 7 5"><path d="M0 4.500l3.500-4 3.500 4z" fill="#000"/></svg>
<svg style="left:244px;top:169px;" width="8" height="7" viewBox="0 0 8 7"><path d="M1 0.500l6 6M7 0.500l-6 6" stroke="#000" stroke-width="1.600"/></svg>
<div style="left:3px;top:181px;width:251px;height:130px;background:#fff;border:1px solid;border-color:#696969 #e0e0e0 #e0e0e0 #696969;"></div>
<div style="left:12px;top:189px;width:10px;height:1px;background:repeating-linear-gradient(to right,#9a9a9a 0,#9a9a9a 1px,transparent 1px,transparent 2px);"></div>
<div style="left:12px;top:189px;width:1px;height:12px;background:repeating-linear-gradient(to bottom,#9a9a9a 0,#9a9a9a 1px,transparent 1px,transparent 2px);"></div>
<div style="left:17px;top:204px;width:6px;height:1px;background:repeating-linear-gradient(to right,#9a9a9a 0,#9a9a9a 1px,transparent 1px,transparent 2px);"></div>
<div style="left:31px;top:211px;width:1px;height:8px;background:repeating-linear-gradient(to bottom,#9a9a9a 0,#9a9a9a 1px,transparent 1px,transparent 2px);"></div>
<div style="left:31px;top:219px;width:10px;height:1px;background:repeating-linear-gradient(to right,#9a9a9a 0,#9a9a9a 1px,transparent 1px,transparent 2px);"></div>
<div style="left:8px;top:200px;width:9px;height:9px;background:#fff;border:1px solid #848484;"></div>
<div style="left:10px;top:204px;width:5px;height:1px;background:#000;"></div>
<svg style="left:23px;top:182px;" width="15" height="14" viewBox="0 0 15 14"><path d="M0.500 12.500v-10l1.500-1.500h4l1.500 1.500h6v10z" fill="#ffe83a" stroke="#c8b840"/></svg>
<svg style="left:23px;top:197px;" width="15" height="14" viewBox="0 0 15 14"><path d="M0.500 12.500v-10l1.500-1.500h4l1.500 1.500h6v10z" fill="#ffe83a" stroke="#c8b840"/></svg>
<span class="t" style="left:44px;top:182px;font-size:11px;line-height:14px;color:#000;transform:scaleX(0.8697);">Sheet</span>
<span class="t" style="left:44px;top:197px;font-size:11px;line-height:14px;color:#000;transform:scaleX(0.8844);">Screen Category</span>
<div style="left:42px;top:213px;width:15px;height:12px;background:#fff;border:1px solid #1c1c8c;box-shadow:inset 0 0 0 .5px #1c1c8c;"></div>
<div style="left:60px;top:212px;width:106px;height:14px;background:#ececec;"></div>
<span class="t" style="left:63px;top:212px;font-size:11px;line-height:14px;color:#000;font-weight:bold;transform:scaleX(1.0237);">0000:Pengendalian</span>
<div style="left:4px;top:294px;width:250px;height:16px;background:#f0f0f0;"></div>
<svg style="left:0px;top:294px;" width="256" height="17" viewBox="0 0 256 17"><path d="M80 0.500h173" stroke="#404040"/><path d="M80.500 0l4.500 15.500h82l3.500-15M169.500 0l4.500 15.500h39.500l4.500-15.500" fill="#f0f0f0" stroke="#000"/><path d="M4.500 0l5 15.500h69.500l4.500-15.500" fill="#fff" stroke="#000"/></svg>
<span class="t" style="left:13px;top:295px;font-size:11px;line-height:14px;color:#000;transform:scaleX(0.9002);">Screen/Sheet</span>
<span class="t" style="left:87px;top:295px;font-size:11px;line-height:14px;color:#000;transform:scaleX(0.9155);">Common Setting</span>
<span class="t" style="left:176px;top:295px;font-size:11px;line-height:14px;color:#000;transform:scaleX(0.8726);">System</span>
<div style="left:0px;top:318px;width:258px;height:2px;background:#a0a0a0;"></div>
<div style="left:0px;top:320px;width:258px;height:1px;background:#fff;"></div>
<div style="left:257px;top:166px;width:5px;height:510px;background:#f6f6f6;border-left:1px solid #e2e2e2;border-right:1px solid #e2e2e2;"></div>
<!-- property list -->
<div style="left:3px;top:323px;width:253px;height:13px;border:1px solid;border-color:#fff #a0a0a0 #a0a0a0 #fff;"></div>
<span class="t" style="left:6px;top:322px;font-size:11px;line-height:14px;color:#000;transform:scaleX(0.8746);">Property List</span>
<svg style="left:232px;top:326px;" width="7" height="5" viewBox="0 0 7 5"><path d="M0 4.500l3.500-4 3.500 4z" fill="#000"/></svg>
<svg style="left:244px;top:325px;" width="8" height="7" viewBox="0 0 8 7"><path d="M1 0.500l6 6M7 0.500l-6 6" stroke="#000" stroke-width="1.600"/></svg>
<div style="left:3px;top:337px;width:252px;height:18px;background:#f0f0f0;border:1px solid;border-color:#808080 #fff #fff #808080;box-shadow:inset -1px -1px 0 #a0a0a0;"></div>
<span class="t" style="left:6px;top:338px;font-size:12px;line-height:15px;color:#000;font-weight:bold;transform:scaleX(0.9455);">Label : LBL0007</span>
<div style="left:4px;top:357px;width:233px;height:298px;background:#f0f0f0;border-left:1px solid #606060;"></div>
<div style="left:4px;top:357px;width:89px;height:19px;background:#f0f0f0;border:1px solid;border-color:#fff #404040 #202020 #fff;border-bottom-width:2px;"></div>
<span class="t" style="left:34.5px;top:359px;font-size:12px;line-height:15px;color:#000;font-weight:bold;transform:scaleX(1.1348);">Item</span>
<div style="left:93px;top:357px;width:37px;height:19px;background:#f0f0f0;border:1px solid;border-color:#fff #404040 #202020 #fff;border-bottom-width:2px;"></div>
<span class="t" style="left:96.5px;top:359px;font-size:12px;line-height:15px;color:#000;font-weight:bold;transform:scaleX(0.9183);">Indire</span>
<div style="left:130px;top:357px;width:106px;height:19px;background:#f0f0f0;border:1px solid;border-color:#fff #404040 #202020 #fff;border-bottom-width:2px;"></div>
<span class="t" style="left:166.5px;top:359px;font-size:12px;line-height:15px;color:#000;font-weight:bold;transform:scaleX(1.0526);">Value</span>
<div style="left:131px;top:377px;width:105px;height:16px;background:#fff;"></div>
<div style="left:131px;top:394px;width:105px;height:16px;background:#fff;"></div>
<div style="left:131px;top:411px;width:105px;height:16px;background:#fff;"></div>
<div style="left:131px;top:495px;width:105px;height:16px;background:#fff;"></div>
<div style="left:131px;top:512px;width:105px;height:16px;background:#fff;"></div>
<div style="left:131px;top:529px;width:104px;height:14px;background:#000;"></div>
<div style="left:4px;top:393px;width:232px;height:1px;background:#707070;"></div>
<div style="left:4px;top:410px;width:232px;height:1px;background:#707070;"></div>
<div style="left:4px;top:427px;width:232px;height:1px;background:#707070;"></div>
<div style="left:4px;top:443px;width:232px;height:1px;background:#707070;"></div>
<div style="left:4px;top:460px;width:232px;height:1px;background:#707070;"></div>
<div style="left:4px;top:477px;width:232px;height:1px;background:#707070;"></div>
<div style="left:4px;top:494px;width:232px;height:1px;background:#707070;"></div>
<div style="left:4px;top:511px;width:232px;height:1px;background:#707070;"></div>
<div style="left:4px;top:528px;width:232px;height:1px;background:#707070;"></div>
<div style="left:4px;top:544px;width:232px;height:1px;background:#707070;"></div>
<div style="left:4px;top:561px;width:232px;height:1px;background:#707070;"></div>
<div style="left:4px;top:578px;width:232px;height:1px;background:#707070;"></div>
<div style="left:4px;top:595px;width:232px;height:1px;background:#707070;"></div>
<div style="left:4px;top:612px;width:232px;height:1px;background:#707070;"></div>
<div style="left:4px;top:629px;width:232px;height:1px;background:#707070;"></div>
<div style="left:4px;top:646px;width:232px;height:1px;background:#707070;"></div>
<div style="left:93px;top:376px;width:1px;height:279px;background:#707070;"></div>
<div style="left:130px;top:376px;width:1px;height:279px;background:#707070;"></div>
<div style="left:236px;top:376px;width:1px;height:279px;background:#707070;"></div>
<span class="t" style="left:8px;top:378px;font-size:12px;line-height:15px;color:#000;transform:scaleX(0.9537);">Label</span>
<span class="t" style="left:135px;top:378px;font-size:12px;line-height:15px;color:#000;transform:scaleX(0.9054);">M REVERSE</span>
<span class="t" style="left:8px;top:395px;font-size:12px;line-height:15px;color:#000;transform:scaleX(0.9163);">Font</span>
<span class="t" style="left:135px;top:395px;font-size:12px;line-height:15px;color:#000;transform:scaleX(0.9446);">Standard</span>
<span class="t" style="left:14px;top:412px;font-size:12px;line-height:15px;color:#000;transform:scaleX(0.8568);">Size</span>
<span class="t" style="left:135px;top:412px;font-size:12px;line-height:15px;color:#000;transform:scaleX(0.8270);">1x1</span>
<span class="t" style="left:14px;top:496px;font-size:12px;line-height:15px;color:#000;transform:scaleX(0.9657);">Vertical Positio</span>
<span class="t" style="left:135px;top:496px;font-size:12px;line-height:15px;color:#000;transform:scaleX(0.9718);">Center</span>
<span class="t" style="left:14px;top:513px;font-size:12px;line-height:15px;color:#000;transform:scaleX(0.9542);">Horizontal Posi</span>
<span class="t" style="left:135px;top:513px;font-size:12px;line-height:15px;color:#000;transform:scaleX(0.9493);">Left</span>
<span class="t" style="left:14px;top:530px;font-size:12px;line-height:15px;color:#000;transform:scaleX(0.9765);">Color</span>
<div style="left:97px;top:532px;width:11px;height:11px;background:#fff;border:1px solid;border-color:#606060 #e0e0e0 #e0e0e0 #606060;box-shadow:inset 1px 1px 0 #a0a0a0;"></div>
<div style="left:238px;top:357px;width:15px;height:298px;background:#f4f4f4;"></div>
<svg style="left:241px;top:363px;" width="8" height="5" viewBox="0 0 8 5"><path d="M0 4.500l4-4 4 4z" fill="#505050"/></svg>
<div style="left:238px;top:376px;width:14px;height:172px;border:1px solid #a8a8a8;border-radius:2px;background:linear-gradient(to right,#f4f4f4,#dcdcdc 50%,#c8c8c8);"></div>
<div style="left:241px;top:456px;width:8px;height:1px;background:#707070;"></div>
<div style="left:241px;top:458px;width:8px;height:1px;background:#707070;"></div>
<div style="left:241px;top:460px;width:8px;height:1px;background:#707070;"></div>
<div style="left:241px;top:462px;width:8px;height:1px;background:#707070;"></div>
<svg style="left:241px;top:645px;" width="8" height="5" viewBox="0 0 8 5"><path d="M0 0.500l4 4 4-4z" fill="#505050"/></svg>
<div style="left:4px;top:655px;width:250px;height:1px;background:#404040;"></div>
<svg style="left:0px;top:655px;" width="256" height="17" viewBox="0 0 256 17"><path d="M57.500 0l4.500 15.500h29.500l3.500-15.500M93.500 0l4 15.500h68l3-15.500M166.500 0l4.500 15.500h36l3-15.500M208.500 0l4.500 15.500h36l3.500-15.500" fill="#f0f0f0" stroke="#000"/><path d="M4.500 0l5 15.500h46.500l3.500-15.500" fill="#fff" stroke="#000"/></svg>
<span class="t" style="left:13.5px;top:657px;font-size:11px;line-height:14px;color:#000;transform:scaleX(0.8944);">General</span>
<span class="t" style="left:66.5px;top:657px;font-size:11px;line-height:14px;color:#000;transform:scaleX(0.9419);">Text</span>
<span class="t" style="left:99.5px;top:657px;font-size:11px;line-height:14px;color:#000;transform:scaleX(0.8989);">Layout/Frame</span>
<span class="t" style="left:174.5px;top:657px;font-size:11px;line-height:14px;color:#000;transform:scaleX(0.9159);">Action</span>
<span class="t" style="left:216.5px;top:657px;font-size:11px;line-height:14px;color:#000;transform:scaleX(0.8835);">Macro</span>
<div style="left:264px;top:488px;width:2px;height:186px;background:#8a8a8a;"></div>
<div style="left:266px;top:488px;width:1px;height:186px;background:#fafafa;"></div>
<!-- vertical toolbar -->
<div class="gripH" style="left:269px;top:168px;width:44px;height:3px;"></div>
<svg style="left:271px;top:177px;" width="16" height="16" viewBox="0 0 16 16"><rect x="0.500" y="1.500" width="15" height="13" fill="#fff" stroke="#444" stroke-width="1.200"/><path d="M1.500 14h13.500v-12" fill="none" stroke="#bbb"/><text x="8" y="11.800" font-size="10" fill="#2838a8" text-anchor="middle" font-family="Liberation Sans,sans-serif" textLength="11" lengthAdjust="spacingAndGlyphs">PB</text></svg>
<svg style="left:293px;top:177px;" width="16" height="16" viewBox="0 0 16 16"><rect x="0.500" y="1.500" width="15" height="13" fill="#fff" stroke="#444" stroke-width="1.200"/><path d="M1.500 14h13.500v-12" fill="none" stroke="#bbb"/><text x="8" y="11.800" font-size="10.5" fill="#2838a8" text-anchor="middle" font-family="Liberation Sans,sans-serif" textLength="9" lengthAdjust="spacingAndGlyphs">W</text></svg>
<svg style="left:271px;top:198px;" width="16" height="16" viewBox="0 0 16 16"><rect x="0.500" y="1.500" width="15" height="13" fill="#fff" stroke="#444" stroke-width="1.200"/><path d="M1.500 14h13.500v-12" fill="none" stroke="#bbb"/><text x="8" y="11.800" font-size="9.5" fill="#2838a8" text-anchor="middle" font-family="Liberation Sans,sans-serif" textLength="13" lengthAdjust="spacingAndGlyphs">CMD</text></svg>
<svg style="left:293px;top:198px;" width="16" height="16" viewBox="0 0 16 16"><circle cx="8" cy="8" r="7" fill="#f4ec40" stroke="#55551c" stroke-width="1.200"/><text x="8" y="11.800" font-size="10.500" fill="#333" text-anchor="middle" font-family="Liberation Sans,sans-serif">B</text></svg>
<svg style="left:271px;top:220px;" width="16" height="16" viewBox="0 0 16 16"><circle cx="8" cy="8" r="7" fill="#f4ec40" stroke="#55551c" stroke-width="1.200"/><text x="8" y="11.800" font-size="10.500" fill="#333" text-anchor="middle" font-family="Liberation Sans,sans-serif">W</text></svg>
<svg style="left:293px;top:220px;" width="16" height="16" viewBox="0 0 16 16"><rect x="0.500" y="1.500" width="15" height="13" fill="#fff" stroke="#444" stroke-width="1.200"/><path d="M1.500 14h13.500v-12" fill="none" stroke="#bbb"/><text x="8" y="11.800" font-size="10" fill="#2838a8" text-anchor="middle" font-family="Liberation Sans,sans-serif" textLength="11" lengthAdjust="spacingAndGlyphs">MF</text></svg>
<svg style="left:271px;top:242px;" width="16" height="16" viewBox="0 0 16 16"><rect x="0.500" y="4.500" width="15" height="7.500" fill="#fff" stroke="#222" stroke-width="1.200"/><text x="8" y="10.500" font-size="5.500" font-weight="bold" fill="#222" text-anchor="middle" font-family="Liberation Sans,sans-serif" textLength="12" lengthAdjust="spacingAndGlyphs">LABEL</text></svg>
<svg style="left:293px;top:242px;" width="16" height="16" viewBox="0 0 16 16"><rect x="0.500" y="4.500" width="15" height="8" fill="#fff" stroke="#222" stroke-width="1.200"/><text x="6.500" y="11" font-size="7.500" fill="#555" text-anchor="middle" font-family="Liberation Sans,sans-serif">12</text><path d="M10 11l4-9" stroke="#2030c0" stroke-width="1.600"/><path d="M12 2h3v3z" fill="#2030c0"/></svg>
<svg style="left:271px;top:264px;" width="16" height="16" viewBox="0 0 16 16"><rect x="0.500" y="4.500" width="15" height="8" fill="#fff" stroke="#222" stroke-width="1.200"/><text x="6.500" y="11" font-size="7.500" fill="#555" text-anchor="middle" font-family="Liberation Sans,sans-serif">AB</text><path d="M10 11l4-9" stroke="#2030c0" stroke-width="1.600"/><path d="M12 2h3v3z" fill="#2030c0"/></svg>
<svg style="left:293px;top:264px;" width="16" height="16" viewBox="0 0 16 16"><rect x="1" y="1.500" width="14" height="13" fill="#f0f0a0" stroke="#333"/><path d="M1 4.800h14M1 8h14M1 11.200h14" stroke="#333" stroke-width="1.100"/><rect x="12" y="1.500" width="3" height="13" fill="#ddd" stroke="#333" stroke-width=".8"/></svg>
<svg style="left:271px;top:285px;" width="16" height="16" viewBox="0 0 16 16"><rect x="1" y="1.500" width="4.300" height="13" fill="#f4f4f4" stroke="#999"/><rect x="5.800" y="1.500" width="4.300" height="13" fill="#f4f4f4" stroke="#999"/><rect x="10.600" y="1.500" width="4.300" height="13" fill="#f4f4f4" stroke="#999"/><text x="8" y="11" font-size="7" fill="#333" text-anchor="middle" font-family="Liberation Sans,sans-serif" textLength="13">123</text></svg>
<svg style="left:293px;top:285px;" width="16" height="16" viewBox="0 0 16 16"><rect x="1" y="1" width="14" height="14" fill="#707070"/><path d="M2 12a6 6 0 0 1 3-5l3 5z" fill="#2040d0"/><path d="M5 7a6 6 0 0 1 6 0l-3 5z" fill="#f0d020"/><path d="M11 7a6 6 0 0 1 3 5h-6z" fill="#e03020"/></svg>
<svg style="left:271px;top:306px;" width="16" height="16" viewBox="0 0 16 16"><rect x="2" y="1" width="12" height="4.500" fill="#f04030"/><rect x="2" y="5.500" width="12" height="4.500" fill="#f4e040"/><rect x="2" y="10" width="12" height="4.500" fill="#3848e0"/><path d="M1.500 1v14" stroke="#444" stroke-width="1.300" stroke-dasharray="1.500 1"/></svg>
<svg style="left:293px;top:306px;" width="16" height="16" viewBox="0 0 16 16"><rect x="1" y="1" width="14" height="14" fill="#fff"/><path d="M1 9l3-4 3 5 3-6 3 3 2-2" fill="none" stroke="#2040d0"/><path d="M1 5l4 4 3-2 3 4 4-5" fill="none" stroke="#e03060"/><path d="M1 12l4-4 4 3 6-4" fill="none" stroke="#20a0a0"/><path d="M2 14.500h12" stroke="#444" stroke-dasharray="1 2"/></svg>
<svg style="left:271px;top:328px;" width="16" height="16" viewBox="0 0 16 16"><rect x="1" y="2" width="14" height="12" fill="#60d0f0"/><rect x="1" y="11" width="14" height="3" fill="#40c040"/><circle cx="8" cy="6.500" r="4" fill="#208030"/><rect x="7" y="9" width="2" height="4" fill="#704020"/></svg>
<svg style="left:293px;top:328px;" width="16" height="16" viewBox="0 0 16 16"><circle cx="6" cy="4" r="3.300" fill="#e02020"/><path d="M2 8h8l1 2h-10z" fill="#c02020"/><rect x="1" y="9.500" width="14" height="5" fill="#eee" stroke="#333"/><path d="M2 12h12" stroke="#333" stroke-dasharray="1 1" stroke-width="2"/></svg>
<svg style="left:271px;top:350px;" width="16" height="16" viewBox="0 0 16 16"><circle cx="4.500" cy="3.500" r="2.800" fill="#e02020"/><rect x="1" y="5" width="14" height="9.500" fill="#333"/><rect x="5" y="5.500" width="9" height="3" fill="#f0c020"/><rect x="5" y="8.500" width="9" height="3" fill="#e04040"/><rect x="1" y="11.500" width="14" height="3" fill="#3040c0"/><path d="M2 9h12M2 12h12" stroke="#ddd" stroke-dasharray="1 1"/></svg>
<svg style="left:293px;top:350px;" width="16" height="16" viewBox="0 0 16 16"><text x="8" y="7" font-size="8" fill="#2838a8" text-anchor="middle" font-family="Liberation Sans,sans-serif" textLength="15" lengthAdjust="spacingAndGlyphs">Date</text><rect x="1" y="8.500" width="14" height="6" fill="#e0e0e0"/><path d="M1 10h14M1 12h14M1 14h14" stroke="#888" stroke-dasharray="1 1"/></svg>
<svg style="left:271px;top:371px;" width="16" height="16" viewBox="0 0 16 16"><text x="8" y="7" font-size="8" fill="#2838a8" text-anchor="middle" font-family="Liberation Sans,sans-serif" textLength="15" lengthAdjust="spacingAndGlyphs">Time</text><rect x="1" y="8.500" width="14" height="6" fill="#e0e0e0"/><path d="M1 10h14M1 12h14M1 14h14" stroke="#888" stroke-dasharray="1 1"/></svg>
<svg style="left:293px;top:371px;" width="16" height="16" viewBox="0 0 16 16"><rect x="1" y="1" width="14" height="14" fill="#fff"/><path d="M1 6l2-2 2 2 2-2 2 2 2-2 2 2 2-2" fill="none" stroke="#2040d0"/><path d="M1 10l2-2 2 2 2-2 2 2 2-2 2 2 2-2" fill="none" stroke="#20a0a0"/><path d="M10.500 1v14" stroke="#e02040" stroke-width="1.300"/><path d="M1 14.500h14" stroke="#e02040" stroke-dasharray="1 2"/></svg>
<svg style="left:271px;top:392px;" width="16" height="16" viewBox="0 0 16 16"><rect x="1" y="1.500" width="14" height="13" fill="#fff" stroke="#5080a0"/><rect x="1" y="1.500" width="7" height="4.500" fill="#40a040"/><text x="4.500" y="5.500" font-size="4.500" fill="#fff" text-anchor="middle" font-family="Liberation Sans,sans-serif">01</text><path d="M1 6h14M1 9h14M1 12h14M5.500 6v8.500M10 1.500v13" stroke="#d08060" stroke-width=".9"/></svg>
<svg style="left:293px;top:392px;" width="16" height="16" viewBox="0 0 16 16"><rect x="1" y="1.500" width="2" height="13" fill="#303030"/><rect x="3" y="1.500" width="2" height="13" fill="#3040e0"/><rect x="5" y="1.500" width="2" height="13" fill="#e040e0"/><rect x="7" y="1.500" width="2" height="13" fill="#40c040"/><rect x="9" y="1.500" width="2" height="13" fill="#8040c0"/><rect x="11" y="1.500" width="2" height="13" fill="#404040"/><rect x="13" y="1.500" width="2" height="13" fill="#606060"/></svg>
<svg style="left:271px;top:414px;" width="16" height="16" viewBox="0 0 16 16"><rect x="0.500" y="4.500" width="15" height="8.500" fill="#fff" stroke="#222" stroke-width="1.300"/><text x="7" y="11.500" font-size="7" fill="#222" text-anchor="middle" font-family="Liberation Sans,sans-serif" textLength="11" lengthAdjust="spacingAndGlyphs">Tmp</text><path d="M13.500 2v8" stroke="#2030c0" stroke-width="2"/></svg>
<svg style="left:293px;top:414px;" width="16" height="16" viewBox="0 0 16 16"><path d="M1 12l4-8 4 9 3-8 3 6" fill="none" stroke="#2040c0" stroke-width="1.200"/><path d="M1 13l4-8 4 9 3-8 3 6" fill="none" stroke="#40a060" stroke-width=".8"/></svg>
<svg style="left:271px;top:436px;" width="16" height="16" viewBox="0 0 16 16"><path d="M3 1.500h7l3 3v10h-10z" fill="#f8f8f8" stroke="#c0c0c0"/><path d="M5 6h6M5 8h6M5 10h6M5 12h4" stroke="#d0d0d0"/></svg>
<svg style="left:293px;top:436px;" width="16" height="16" viewBox="0 0 16 16"><path d="M1.500 1.500h6l2 2v9h-8z" fill="#fff" stroke="#333"/><path d="M3 5h4M3 7h4M3 9h2" stroke="#333"/><rect x="8" y="8" width="7" height="7" fill="#60d0f0"/><path d="M11.500 8.500l-3 4.500h6z" fill="#208030"/><rect x="8" y="13.500" width="7" height="1.500" fill="#40c040"/></svg>
<svg style="left:271px;top:462px;" width="16" height="16" viewBox="0 0 16 16"><rect x="4.500" y="4.500" width="10" height="9" fill="#999" stroke="#666"/><rect x="3" y="3" width="10" height="9" fill="#ccc" stroke="#555"/><rect x="1.500" y="1.500" width="10" height="9" fill="#fff" stroke="#222" stroke-width="1.300"/></svg>
<svg style="left:293px;top:462px;" width="16" height="16" viewBox="0 0 16 16"><path d="M3 1v14M7.500 1v14M12 1v14M1 4h14M1 8h14M1 12h14" stroke="#c0c0c0" stroke-width="1.200"/></svg>
<!-- canvas -->
<div style="left:317px;top:165px;width:675px;height:1px;background:#696969;"></div>
<div style="left:318px;top:166px;width:658px;height:490px;background:#000;"></div>
<div style="left:976px;top:166px;width:16px;height:490px;background:#fafafa;"></div>
<div style="left:976px;top:166px;width:16px;height:16px;background:#f0f0f0;border:1px solid;border-color:#f8f8f8 #6e6e6e #6e6e6e #f8f8f8;box-shadow:inset -1px -1px 0 #a8a8a8,inset 1px 1px 0 #fff;"></div>
<svg style="left:980px;top:171px;" width="8" height="5" viewBox="0 0 8 5"><path d="M0 4.500l4-4.500 4 4.500z" fill="#000"/></svg>
<div style="left:976px;top:182px;width:16px;height:312px;background:#f0f0f0;border:1px solid;border-color:#f8f8f8 #6e6e6e #6e6e6e #f8f8f8;box-shadow:inset -1px -1px 0 #a8a8a8,inset 1px 1px 0 #fff;"></div>
<div style="left:976px;top:640px;width:16px;height:16px;background:#f0f0f0;border:1px solid;border-color:#f8f8f8 #6e6e6e #6e6e6e #f8f8f8;box-shadow:inset -1px -1px 0 #a8a8a8,inset 1px 1px 0 #fff;"></div>
<svg style="left:980px;top:646px;" width="8" height="5" viewBox="0 0 8 5"><path d="M0 0l4 4.500 4-4.500z" fill="#000"/></svg>
<div style="left:318px;top:656px;width:658px;height:15px;background:#fafafa;"></div>
<div style="left:318px;top:656px;width:15px;height:15px;background:#f0f0f0;border:1px solid;border-color:#f8f8f8 #6e6e6e #6e6e6e #f8f8f8;box-shadow:inset -1px -1px 0 #a8a8a8,inset 1px 1px 0 #fff;"></div>
<svg style="left:323px;top:659px;" width="5" height="8" viewBox="0 0 5 8"><path d="M4.500 0l-4.500 4 4.500 4z" fill="#000"/></svg>
<div style="left:333px;top:656px;width:430px;height:15px;background:#f0f0f0;border:1px solid;border-color:#f8f8f8 #6e6e6e #6e6e6e #f8f8f8;box-shadow:inset -1px -1px 0 #a8a8a8,inset 1px 1px 0 #fff;"></div>
<div style="left:961px;top:656px;width:15px;height:15px;background:#f0f0f0;border:1px solid;border-color:#f8f8f8 #6e6e6e #6e6e6e #f8f8f8;box-shadow:inset -1px -1px 0 #a8a8a8,inset 1px 1px 0 #fff;"></div>
<svg style="left:966px;top:659px;" width="5" height="8" viewBox="0 0 5 8"><path d="M0 0l4.500 4-4.500 4z" fill="#000"/></svg>
<div style="left:976px;top:656px;width:16px;height:15px;background:#f0f0f0;"></div>
<div style="left:318px;top:671px;width:674px;height:1px;background:#8c8c8c;"></div>
<div style="left:992px;top:166px;width:9px;height:510px;background:#f8f8f8;"></div>
<div style="left:997px;top:166px;width:2px;height:506px;background:#a8a8a8;"></div>
<div style="left:999px;top:166px;width:2px;height:510px;background:#f0f0f0;"></div>
<!-- canvas objects -->
<div style="left:509px;top:278px;width:76px;height:30px;background:#d2d2d2;border:1px solid #bdbdbd;"></div>
<svg style="left:509px;top:278px" width="76" height="30"><text x="1.500" y="20" font-size="13" fill="#3a3a3a" font-family="Liberation Mono,monospace" textLength="67" lengthAdjust="spacingAndGlyphs" transform="translate(0,-7) scale(1,1.350)">M FORWARD</text></svg>
<div style="left:601px;top:279px;width:77px;height:30px;background:#d2d2d2;"></div>
<div style="left:609px;top:287px;width:77px;height:30px;background:#d2d0d0;"></div>
<svg style="left:601px;top:279px" width="90" height="40"><text x="2" y="20" font-size="13" fill="#3a3a3a" font-family="Liberation Mono,monospace" transform="translate(0,-10) scale(.95,1.350)">M</text><text x="9" y="27.500" font-size="13" fill="#2a2a2a" font-family="Liberation Mono,monospace" textLength="67" lengthAdjust="spacingAndGlyphs" transform="translate(0,-9.500) scale(1,1.350)">M REVERSE</text></svg>
<div style="left:609px;top:287px;width:6px;height:6px;border:1px solid #222;background:#d8d8d8;"></div>
<div style="left:644px;top:287px;width:6px;height:6px;border:1px solid #222;background:#d8d8d8;"></div>
<div style="left:679px;top:287px;width:6px;height:6px;border:1px solid #222;background:#d8d8d8;"></div>
<div style="left:609px;top:299px;width:6px;height:6px;border:1px solid #222;background:#d8d8d8;"></div>
<div style="left:679px;top:299px;width:6px;height:6px;border:1px solid #222;background:#d8d8d8;"></div>
<div style="left:609px;top:311px;width:6px;height:6px;border:1px solid #222;background:#d8d8d8;"></div>
<div style="left:644px;top:311px;width:6px;height:6px;border:1px solid #222;background:#d8d8d8;"></div>
<div style="left:679px;top:311px;width:6px;height:6px;border:1px solid #222;background:#d8d8d8;"></div>
<div style="left:517px;top:320px;width:59px;height:52px;background:#585858;border:1px solid;border-color:#8c8c8c #707070 #6a6a6a #8c8c8c;"></div>
<svg style="left:519px;top:322px;" width="55" height="48" viewBox="0 0 55 48"><defs><radialGradient id="g517" cx="35%" cy="30%" r="75%"><stop offset="0" stop-color="#1458ae"/><stop offset=".55" stop-color="#0b4c9c"/><stop offset="1" stop-color="#063a7c"/></radialGradient></defs><ellipse cx="27.500" cy="24.500" rx="26" ry="23" fill="#141414"/><ellipse cx="27" cy="24" rx="23.500" ry="20.500" fill="url(#g517)"/><path d="M8 17c4-8 12-11 20-11" fill="none" stroke="rgba(255,255,255,.35)" stroke-width="1.200"/></svg>
<div style="left:607px;top:320px;width:59px;height:52px;background:#585858;border:1px solid;border-color:#8c8c8c #707070 #6a6a6a #8c8c8c;"></div>
<svg style="left:609px;top:322px;" width="55" height="48" viewBox="0 0 55 48"><defs><radialGradient id="g607" cx="35%" cy="30%" r="75%"><stop offset="0" stop-color="#c82008"/><stop offset=".55" stop-color="#b41404"/><stop offset="1" stop-color="#8c0c00"/></radialGradient></defs><ellipse cx="27.500" cy="24.500" rx="26" ry="23" fill="#141414"/><ellipse cx="27" cy="24" rx="23.500" ry="20.500" fill="url(#g607)"/><path d="M8 17c4-8 12-11 20-11" fill="none" stroke="rgba(255,255,255,.35)" stroke-width="1.200"/></svg>
<svg style="left:470px;top:392px;" width="66" height="60" viewBox="0 0 66 60"><ellipse cx="33" cy="30" rx="32" ry="28.300" fill="#8a8a8a"/><ellipse cx="33" cy="30" rx="30.800" ry="27.200" fill="none" stroke="#b4b4b4" stroke-width=".8"/><ellipse cx="33" cy="30" rx="28" ry="24.500" fill="#000098"/><path d="M5.500 30a27.500 24 0 0 1 27.500-24l0 5a22 19 0 0 0-22 19z" fill="#fff"/><path d="M33 6a27.500 24 0 0 1 18 6l-3.500 4a22 19 0 0 0-14.500-5z" fill="#7878ff"/><path d="M5.500 30a27.500 24 0 0 0 6 15l4-3a22 19 0 0 1-4.500-12z" fill="#7878f0"/><ellipse cx="34.300" cy="30.800" rx="23.500" ry="20.300" fill="#0000ee"/><ellipse cx="33" cy="30" rx="28" ry="24.500" fill="none" stroke="#303070" stroke-width="1"/></svg>
<svg style="left:559.5px;top:392px;" width="66" height="60" viewBox="0 0 66 60"><ellipse cx="33" cy="30" rx="32" ry="28.300" fill="#8a8a8a"/><ellipse cx="33" cy="30" rx="30.800" ry="27.200" fill="none" stroke="#b4b4b4" stroke-width=".8"/><ellipse cx="33" cy="30" rx="28" ry="24.500" fill="#000098"/><path d="M5.500 30a27.500 24 0 0 1 27.500-24l0 5a22 19 0 0 0-22 19z" fill="#fff"/><path d="M33 6a27.500 24 0 0 1 18 6l-3.500 4a22 19 0 0 0-14.500-5z" fill="#7878ff"/><path d="M5.500 30a27.500 24 0 0 0 6 15l4-3a22 19 0 0 1-4.500-12z" fill="#7878f0"/><ellipse cx="34.300" cy="30.800" rx="23.500" ry="20.300" fill="#0000ee"/><ellipse cx="33" cy="30" rx="28" ry="24.500" fill="none" stroke="#303070" stroke-width="1"/></svg>
<svg style="left:649.5px;top:392px;" width="66" height="60" viewBox="0 0 66 60"><ellipse cx="33" cy="30" rx="32" ry="28.300" fill="#8a8a8a"/><ellipse cx="33" cy="30" rx="30.800" ry="27.200" fill="none" stroke="#b4b4b4" stroke-width=".8"/><ellipse cx="33" cy="30" rx="28" ry="24.500" fill="#000098"/><path d="M5.500 30a27.500 24 0 0 1 27.500-24l0 5a22 19 0 0 0-22 19z" fill="#fff"/><path d="M33 6a27.500 24 0 0 1 18 6l-3.500 4a22 19 0 0 0-14.500-5z" fill="#7878ff"/><path d="M5.500 30a27.500 24 0 0 0 6 15l4-3a22 19 0 0 1-4.500-12z" fill="#7878f0"/><ellipse cx="34.300" cy="30.800" rx="23.500" ry="20.300" fill="#0000ee"/><ellipse cx="33" cy="30" rx="28" ry="24.500" fill="none" stroke="#303070" stroke-width="1"/></svg>
<svg style="left:482px;top:478px;" width="78" height="31" viewBox="0 0 78 31"><rect x="0.500" y="0.500" width="76" height="30" fill="none" stroke="#fff" stroke-width="1" stroke-dasharray="3 2"/></svg>
<svg style="left:527px;top:488px;" width="19" height="19" viewBox="0 0 19 19"><path d="M9.500 0.500l9 9-9 9-9-9z" fill="none" stroke="#a0a0a0" stroke-width=".8"/><path d="M9.500 4v11M4 9.500h11" stroke="#d8d8d8" stroke-width="1.100"/><path d="M7.500 5.500l2-2.500 2 2.500M7.500 13.500l2 2.500 2-2.500M5.500 7.500l-2.500 2 2.500 2M13.500 7.500l2.500 2-2.500 2" fill="none" stroke="#d0d0d0" stroke-width="1"/><rect x="8" y="8" width="3" height="3" fill="#000"/></svg>
<!-- palette -->
<div style="left:1001px;top:167px;width:275px;height:13px;border:1px solid;border-color:#fff #a0a0a0 #a0a0a0 #fff;"></div>
<span class="t" style="left:1004px;top:165.5px;font-size:11px;line-height:14px;color:#000;transform:scaleX(0.7885);">Palette</span>
<svg style="left:1254px;top:171px;" width="6" height="4" viewBox="0 0 6 4"><path d="M0 0h6l-3 3.500z" fill="#555"/></svg>
<svg style="left:1265px;top:169px;" width="8" height="7" viewBox="0 0 8 7"><path d="M1 0.500l6 6M7 0.500l-6 6" stroke="#000" stroke-width="1.600"/></svg>
<div style="left:1002px;top:181px;width:274px;height:494px;border:1px solid;border-color:#808080 #fff #fff #808080;"></div>
<div style="left:1003px;top:182px;width:272px;height:68px;border-left:1px solid #404040;border-top:1px solid #404040;"></div>
<div class="sunk2" style="left:1010px;top:189px;width:88px;height:18px;background:#fff;"></div>
<div class="btn" style="left:1080px;top:191px;width:16px;height:14px;"></div>
<svg style="left:1084px;top:196px;" width="8" height="5" viewBox="0 0 8 5"><path d="M0 0h8l-4 4.500z" fill="#000"/></svg>
<span class="t" style="left:1014px;top:191px;font-size:12px;line-height:16px;color:#000;transform:scaleX(0.8442);">DesignTemplat</span>
<div class="sunk2" style="left:1109px;top:189px;width:88px;height:18px;background:#fff;"></div>
<div class="btn" style="left:1179px;top:191px;width:16px;height:14px;"></div>
<svg style="left:1183px;top:196px;" width="8" height="5" viewBox="0 0 8 5"><path d="M0 0h8l-4 4.500z" fill="#000"/></svg>
<span class="t" style="left:1113px;top:191px;font-size:12px;line-height:16px;color:#000;transform:scaleX(0.8357);">Maintenance(C</span>
<div class="sunk2" style="left:1010px;top:218px;width:88px;height:18px;background:#fff;"></div>
<div class="btn" style="left:1080px;top:220px;width:16px;height:14px;"></div>
<svg style="left:1084px;top:225px;" width="8" height="5" viewBox="0 0 8 5"><path d="M0 0h8l-4 4.500z" fill="#000"/></svg>
<span class="t" style="left:1014px;top:220px;font-size:12px;line-height:16px;color:#000;transform:scaleX(0.8146);">100%</span>
<div style="left:1208px;top:189px;width:44px;height:17px;background:#f0f0f0;border:1px solid;border-color:#a0a0a0 #fff #fff #a0a0a0;"></div>
<div style="left:1210px;top:191px;width:23px;height:11px;background:#000;"></div>
<div style="left:1236px;top:191px;width:14px;height:13px;background:#f0f0f0;border:1px solid;border-color:#fff #a0a0a0 #a0a0a0 #fff;"></div>
<svg style="left:1240px;top:196px;" width="6" height="4" viewBox="0 0 6 4"><path d="M0 0h6l-3 3.500z" fill="#a0a0a0"/></svg>
<div class="btn" style="left:1109px;top:217px;width:45px;height:18px;"></div>
<span class="t" style="left:1118px;top:218px;font-size:12px;line-height:16px;color:#000;transform:scaleX(0.7940);">Import</span>
<div style="left:1004px;top:251px;width:253px;height:326px;background:#000;"></div>
<div style="left:1257px;top:250px;width:15px;height:327px;background:#f0f0f0;"></div>
<svg style="left:1261px;top:258px;" width="7" height="5" viewBox="0 0 7 5"><path d="M0 4.500l3.500-4 3.500 4z" fill="#404040"/></svg>
<div style="left:1258px;top:266px;width:13px;height:178px;border:1px solid #b0b0b0;border-radius:2px;background:linear-gradient(to right,#f8f8f8,#e8e8e8 50%,#d4d4d4);"></div>
<div style="left:1261px;top:353px;width:7px;height:1px;background:#707070;"></div>
<div style="left:1261px;top:355px;width:7px;height:1px;background:#707070;"></div>
<div style="left:1261px;top:357px;width:7px;height:1px;background:#707070;"></div>
<div style="left:1261px;top:359px;width:7px;height:1px;background:#707070;"></div>
<svg style="left:1261px;top:566px;" width="7" height="5" viewBox="0 0 7 5"><path d="M0 0.500l3.500 4 3.500-4z" fill="#404040"/></svg>
<svg style="left:1023px;top:269px;" width="190" height="143" viewBox="0 0 190 143"><rect x="0.500" y="0.500" width="189" height="142" fill="#5c5c5c" stroke="#fff"/><rect x="1" y="1" width="188" height="9" fill="#3c3c3c"/><rect x="147" y="1.500" width="41" height="7" fill="#000"/><text x="10" y="7.5" font-size="4.5" font-weight="bold" fill="#f0f0f0" font-family="Liberation Sans,sans-serif">Self-Diagnosis</text><rect x="1" y="10" width="188" height="9.5" fill="#4a4a4a"/><rect x="3" y="19.5" width="184" height="1.600" fill="#e08820"/><rect x="3.500" y="21.5" width="183" height="93.69999999999999" fill="#686868" stroke="#8a8a8a" stroke-width=".8"/><rect x="180" y="23.0" width="4" height="4" fill="none" stroke="#999" stroke-width=".7"/><text x="14" y="26.5" font-size="4.3" font-weight="bold" fill="#f4f4f4" font-family="Liberation Sans,sans-serif">Equipment1</text><rect x="10" y="29" width="170" height="81.19999999999999" fill="#9a9a9a"/><rect x="10.5" y="29.5" width="15" height="10" fill="#4a4a4a"/><rect x="26.5" y="29.5" width="48" height="10" fill="#4a4a4a"/><text x="50.5" y="37.5" font-size="4" fill="#f0f0f0" text-anchor="middle" font-family="Liberation Sans,sans-serif">Item</text><rect x="75.5" y="29.5" width="39" height="10" fill="#4a4a4a"/><text x="95.0" y="37.5" font-size="4" fill="#f0f0f0" text-anchor="middle" font-family="Liberation Sans,sans-serif">Setting Value</text><rect x="115.5" y="29.5" width="41" height="10" fill="#4a4a4a"/><text x="136.0" y="37.5" font-size="4" fill="#f0f0f0" text-anchor="middle" font-family="Liberation Sans,sans-serif">Present Value</text><rect x="157.5" y="29.5" width="22" height="10" fill="#4a4a4a"/><rect x="10.5" y="41.0" width="15" height="9.7" fill="#c4c4c4" stroke="#e8e8e8" stroke-width=".6"/><rect x="26.5" y="40.5" width="130" height="10.7" fill="#000"/><path d="M75 40.0v11.7M115 40.0v11.7" stroke="#9a9a9a"/><text x="50.5" y="48.2" font-size="3.8" font-weight="normal" fill="#f0f0f0" text-anchor="middle" font-family="Liberation Sans,sans-serif">ON-OFF Counts</text><text x="78" y="49.2" font-size="7" fill="#e8d820" font-family="Liberation Mono,monospace" textLength="19" lengthAdjust="spacingAndGlyphs">99999</text><text x="118" y="49.2" font-size="7" fill="#18a828" font-family="Liberation Mono,monospace" textLength="19" lengthAdjust="spacingAndGlyphs">99999</text><text x="112" y="48.7" font-size="3.5" fill="#e0e0e0" text-anchor="end" font-family="Liberation Sans,sans-serif">Times</text><text x="154" y="48.7" font-size="3.5" fill="#e0e0e0" text-anchor="end" font-family="Liberation Sans,sans-serif">Times</text><rect x="158.5" y="41.5" width="20" height="8.7" fill="#d8d8d8" stroke="#f4f4f4" stroke-width=".7"/><text x="168.5" y="48.2" font-size="3.5" fill="#222" text-anchor="middle" font-family="Liberation Sans,sans-serif">Detail</text><rect x="10.5" y="52.7" width="15" height="9.7" fill="#c4c4c4" stroke="#e8e8e8" stroke-width=".6"/><rect x="26.5" y="52.2" width="130" height="10.7" fill="#000"/><path d="M75 51.7v11.7M115 51.7v11.7" stroke="#9a9a9a"/><text x="50.5" y="59.900000000000006" font-size="3.8" font-weight="normal" fill="#f0f0f0" text-anchor="middle" font-family="Liberation Sans,sans-serif">Communication Time</text><text x="78" y="60.900000000000006" font-size="7" fill="#e8d820" font-family="Liberation Mono,monospace" textLength="19" lengthAdjust="spacingAndGlyphs">99999</text><text x="118" y="60.900000000000006" font-size="7" fill="#18a828" font-family="Liberation Mono,monospace" textLength="19" lengthAdjust="spacingAndGlyphs">99999</text><text x="112" y="60.400000000000006" font-size="3.5" fill="#e0e0e0" text-anchor="end" font-family="Liberation Sans,sans-serif">ms</text><text x="154" y="60.400000000000006" font-size="3.5" fill="#e0e0e0" text-anchor="end" font-family="Liberation Sans,sans-serif">ms</text><rect x="158.5" y="53.2" width="20" height="8.7" fill="#d8d8d8" stroke="#f4f4f4" stroke-width=".7"/><text x="168.5" y="59.900000000000006" font-size="3.5" fill="#222" text-anchor="middle" font-family="Liberation Sans,sans-serif">Detail</text><rect x="10.5" y="64.4" width="15" height="9.7" fill="#c4c4c4" stroke="#e8e8e8" stroke-width=".6"/><rect x="26.5" y="63.9" width="130" height="10.7" fill="#000"/><path d="M75 63.4v11.7M115 63.4v11.7" stroke="#9a9a9a"/><text x="50.5" y="71.6" font-size="3.8" font-weight="normal" fill="#f0f0f0" text-anchor="middle" font-family="Liberation Sans,sans-serif">Power on Time</text><text x="78" y="72.6" font-size="7" fill="#e8d820" font-family="Liberation Mono,monospace" textLength="19" lengthAdjust="spacingAndGlyphs">99999</text><text x="118" y="72.6" font-size="7" fill="#18a828" font-family="Liberation Mono,monospace" textLength="19" lengthAdjust="spacingAndGlyphs">99999</text><text x="112" y="72.1" font-size="3.5" fill="#e0e0e0" text-anchor="end" font-family="Liberation Sans,sans-serif">h</text><text x="154" y="72.1" font-size="3.5" fill="#e0e0e0" text-anchor="end" font-family="Liberation Sans,sans-serif">h</text><rect x="158.5" y="64.9" width="20" height="8.7" fill="#d8d8d8" stroke="#f4f4f4" stroke-width=".7"/><text x="168.5" y="71.6" font-size="3.5" fill="#222" text-anchor="middle" font-family="Liberation Sans,sans-serif">Detail</text><rect x="10.5" y="76.1" width="15" height="9.7" fill="#c4c4c4" stroke="#e8e8e8" stroke-width=".6"/><rect x="26.5" y="75.6" width="130" height="10.7" fill="#000"/><path d="M75 75.1v11.7M115 75.1v11.7" stroke="#9a9a9a"/><text x="50.5" y="83.3" font-size="3.8" font-weight="normal" fill="#f0f0f0" text-anchor="middle" font-family="Liberation Sans,sans-serif">Ambient Temperature</text><text x="78" y="84.3" font-size="7" fill="#e8d820" font-family="Liberation Mono,monospace" textLength="19" lengthAdjust="spacingAndGlyphs">99999</text><text x="118" y="84.3" font-size="7" fill="#18a828" font-family="Liberation Mono,monospace" textLength="19" lengthAdjust="spacingAndGlyphs">99999</text><text x="112" y="83.8" font-size="3.5" fill="#e0e0e0" text-anchor="end" font-family="Liberation Sans,sans-serif">°C</text><text x="154" y="83.8" font-size="3.5" fill="#e0e0e0" text-anchor="end" font-family="Liberation Sans,sans-serif">°C</text><rect x="158.5" y="76.6" width="20" height="8.7" fill="#d8d8d8" stroke="#f4f4f4" stroke-width=".7"/><text x="168.5" y="83.3" font-size="3.5" fill="#222" text-anchor="middle" font-family="Liberation Sans,sans-serif">Detail</text><rect x="10.5" y="87.8" width="15" height="9.7" fill="#c4c4c4" stroke="#e8e8e8" stroke-width=".6"/><rect x="26.5" y="87.3" width="130" height="10.7" fill="#000"/><path d="M75 86.8v11.7M115 86.8v11.7" stroke="#9a9a9a"/><text x="50.5" y="95.0" font-size="3.8" font-weight="normal" fill="#f0f0f0" text-anchor="middle" font-family="Liberation Sans,sans-serif">Voltage Value</text><text x="78" y="96.0" font-size="7" fill="#e8d820" font-family="Liberation Mono,monospace" textLength="19" lengthAdjust="spacingAndGlyphs">99999</text><text x="118" y="96.0" font-size="7" fill="#18a828" font-family="Liberation Mono,monospace" textLength="19" lengthAdjust="spacingAndGlyphs">99999</text><text x="112" y="95.5" font-size="3.5" fill="#e0e0e0" text-anchor="end" font-family="Liberation Sans,sans-serif">V</text><text x="154" y="95.5" font-size="3.5" fill="#e0e0e0" text-anchor="end" font-family="Liberation Sans,sans-serif">V</text><rect x="158.5" y="88.3" width="20" height="8.7" fill="#d8d8d8" stroke="#f4f4f4" stroke-width=".7"/><text x="168.5" y="95.0" font-size="3.5" fill="#222" text-anchor="middle" font-family="Liberation Sans,sans-serif">Detail</text><rect x="10.5" y="99.5" width="15" height="9.7" fill="#c4c4c4" stroke="#e8e8e8" stroke-width=".6"/><rect x="26.5" y="99.0" width="130" height="10.7" fill="#000"/><path d="M75 98.5v11.7M115 98.5v11.7" stroke="#9a9a9a"/><text x="50.5" y="106.7" font-size="3.8" font-weight="normal" fill="#f0f0f0" text-anchor="middle" font-family="Liberation Sans,sans-serif">Current Value</text><text x="78" y="107.7" font-size="7" fill="#e8d820" font-family="Liberation Mono,monospace" textLength="19" lengthAdjust="spacingAndGlyphs">99999</text><text x="118" y="107.7" font-size="7" fill="#18a828" font-family="Liberation Mono,monospace" textLength="19" lengthAdjust="spacingAndGlyphs">99999</text><text x="112" y="107.2" font-size="3.5" fill="#e0e0e0" text-anchor="end" font-family="Liberation Sans,sans-serif">mA</text><text x="154" y="107.2" font-size="3.5" fill="#e0e0e0" text-anchor="end" font-family="Liberation Sans,sans-serif">mA</text><rect x="158.5" y="100.0" width="20" height="8.7" fill="#d8d8d8" stroke="#f4f4f4" stroke-width=".7"/><text x="168.5" y="106.7" font-size="3.5" fill="#222" text-anchor="middle" font-family="Liberation Sans,sans-serif">Detail</text><rect x="1" y="116.19999999999999" width="188" height="25.80000000000001" fill="#3a3a3a"/><rect x="2.5" y="125.5" width="45.5" height="7" fill="#f08a10" stroke="#f0f0f0" stroke-width=".6"/><text x="25.25" y="130.5" font-size="3.4" fill="#222" text-anchor="middle" font-family="Liberation Sans,sans-serif">Self-Diagnosis</text><rect x="49" y="125.5" width="45.5" height="7" fill="#cfcfcf" stroke="#f0f0f0" stroke-width=".6"/><text x="71.75" y="130.5" font-size="3.4" fill="#222" text-anchor="middle" font-family="Liberation Sans,sans-serif">Inventory Control</text><rect x="95" y="125.5" width="45.5" height="7" fill="#cfcfcf" stroke="#f0f0f0" stroke-width=".6"/><text x="117.75" y="130.5" font-size="3.4" fill="#222" text-anchor="middle" font-family="Liberation Sans,sans-serif">I/O Test</text><rect x="141" y="125.5" width="45.5" height="7" fill="#cfcfcf" stroke="#f0f0f0" stroke-width=".6"/><text x="163.75" y="130.5" font-size="3.4" fill="#222" text-anchor="middle" font-family="Liberation Sans,sans-serif">Periodic Maintenance</text><rect x="2.5" y="133.5" width="45.5" height="7" fill="#cfcfcf" stroke="#f0f0f0" stroke-width=".6"/><text x="25.25" y="138.5" font-size="3.4" fill="#222" text-anchor="middle" font-family="Liberation Sans,sans-serif">Parts Replacement History</text><rect x="49" y="133.5" width="45.5" height="7" fill="#cfcfcf" stroke="#f0f0f0" stroke-width=".6"/><text x="71.75" y="138.5" font-size="3.4" fill="#222" text-anchor="middle" font-family="Liberation Sans,sans-serif">Time Setting</text><rect x="95" y="133.5" width="45.5" height="7" fill="#cfcfcf" stroke="#f0f0f0" stroke-width=".6"/><text x="117.75" y="138.5" font-size="3.4" fill="#222" text-anchor="middle" font-family="Liberation Sans,sans-serif">Alarm History</text><rect x="141" y="133.5" width="45.5" height="7" fill="#cfcfcf" stroke="#f0f0f0" stroke-width=".6"/><text x="163.75" y="138.5" font-size="3.4" fill="#222" text-anchor="middle" font-family="Liberation Sans,sans-serif">Emergency Phone Number</text></svg>
<span class="t" style="left:1083px;top:413px;font-size:12px;line-height:16px;color:#fff;transform:scaleX(0.9993);">NS12_V1.00</span>
<div style="left:1004px;top:438px;width:253px;height:139px;overflow:hidden;">
<svg style="left:19px;top:0px;" width="190" height="149" viewBox="0 0 190 149"><rect x="0.500" y="0.500" width="189" height="148" fill="#5c5c5c" stroke="#fff"/><rect x="1" y="1" width="188" height="16" fill="#3c3c3c"/><rect x="145" y="1.500" width="43" height="14" fill="#000"/><text x="13" y="12" font-size="8" font-weight="bold" fill="#f0f0f0" font-family="Liberation Sans,sans-serif">Self-Diagnosis</text><rect x="1" y="17" width="188" height="4" fill="#4a4a4a"/><rect x="3" y="21" width="184" height="1.600" fill="#e08820"/><rect x="3.500" y="23" width="183" height="88.5" fill="#686868" stroke="#8a8a8a" stroke-width=".8"/><rect x="180" y="24.5" width="4" height="4" fill="none" stroke="#999" stroke-width=".7"/><text x="15" y="33" font-size="7" font-weight="bold" fill="#f4f4f4" font-family="Liberation Sans,sans-serif">Equipment1</text><rect x="13" y="38" width="167" height="68.5" fill="#9a9a9a"/><rect x="13.5" y="38.5" width="14" height="9" fill="#4a4a4a"/><rect x="28.5" y="38.5" width="48" height="9" fill="#4a4a4a"/><text x="52.5" y="45.5" font-size="5.5" fill="#f0f0f0" text-anchor="middle" font-family="Liberation Sans,sans-serif">Item</text><rect x="77.5" y="38.5" width="40" height="9" fill="#4a4a4a"/><text x="97.5" y="45.5" font-size="5.5" fill="#f0f0f0" text-anchor="middle" font-family="Liberation Sans,sans-serif">Setting Value</text><rect x="118.5" y="38.5" width="41" height="9" fill="#4a4a4a"/><text x="139.0" y="45.5" font-size="5.5" fill="#f0f0f0" text-anchor="middle" font-family="Liberation Sans,sans-serif">Present Value</text><rect x="160.5" y="38.5" width="19" height="9" fill="#4a4a4a"/><rect x="13.5" y="49.0" width="14" height="9.7" fill="#c4c4c4" stroke="#e8e8e8" stroke-width=".6"/><rect x="28.5" y="48.5" width="131" height="10.7" fill="#000"/><path d="M77 48.0v11.7M118 48.0v11.7" stroke="#9a9a9a"/><text x="52.5" y="56.2" font-size="5.3" font-weight="bold" fill="#f0f0f0" text-anchor="middle" font-family="Liberation Sans,sans-serif">ON-OFF Counts</text><text x="80" y="57.2" font-size="8" fill="#e8d820" font-family="Liberation Mono,monospace" textLength="23" lengthAdjust="spacingAndGlyphs">99999</text><text x="121" y="57.2" font-size="8" fill="#18a828" font-family="Liberation Mono,monospace" textLength="23" lengthAdjust="spacingAndGlyphs">99999</text><text x="115" y="56.7" font-size="6" fill="#e0e0e0" text-anchor="end" font-family="Liberation Sans,sans-serif">t</text><text x="157" y="56.7" font-size="6" fill="#e0e0e0" text-anchor="end" font-family="Liberation Sans,sans-serif">t</text><rect x="161.5" y="49.5" width="17" height="8.7" fill="#d8d8d8" stroke="#f4f4f4" stroke-width=".7"/><text x="170.0" y="56.2" font-size="5.2" fill="#222" text-anchor="middle" font-family="Liberation Sans,sans-serif">Detail</text><rect x="13.5" y="60.7" width="14" height="9.7" fill="#c4c4c4" stroke="#e8e8e8" stroke-width=".6"/><rect x="28.5" y="60.2" width="131" height="10.7" fill="#000"/><path d="M77 59.7v11.7M118 59.7v11.7" stroke="#9a9a9a"/><text x="52.5" y="67.9" font-size="5.3" font-weight="bold" fill="#f0f0f0" text-anchor="middle" font-family="Liberation Sans,sans-serif">Comm Time</text><text x="80" y="68.9" font-size="8" fill="#e8d820" font-family="Liberation Mono,monospace" textLength="23" lengthAdjust="spacingAndGlyphs">99999</text><text x="121" y="68.9" font-size="8" fill="#18a828" font-family="Liberation Mono,monospace" textLength="23" lengthAdjust="spacingAndGlyphs">99999</text><text x="115" y="68.4" font-size="6" fill="#e0e0e0" text-anchor="end" font-family="Liberation Sans,sans-serif">ms</text><text x="157" y="68.4" font-size="6" fill="#e0e0e0" text-anchor="end" font-family="Liberation Sans,sans-serif">ms</text><rect x="161.5" y="61.2" width="17" height="8.7" fill="#d8d8d8" stroke="#f4f4f4" stroke-width=".7"/><text x="170.0" y="67.9" font-size="5.2" fill="#222" text-anchor="middle" font-family="Liberation Sans,sans-serif">Detail</text><rect x="13.5" y="72.4" width="14" height="9.7" fill="#c4c4c4" stroke="#e8e8e8" stroke-width=".6"/><rect x="28.5" y="71.9" width="131" height="10.7" fill="#000"/><path d="M77 71.4v11.7M118 71.4v11.7" stroke="#9a9a9a"/><text x="52.5" y="79.60000000000001" font-size="5.3" font-weight="bold" fill="#f0f0f0" text-anchor="middle" font-family="Liberation Sans,sans-serif">Power on Time</text><text x="80" y="80.60000000000001" font-size="8" fill="#e8d820" font-family="Liberation Mono,monospace" textLength="23" lengthAdjust="spacingAndGlyphs">99999</text><text x="121" y="80.60000000000001" font-size="8" fill="#18a828" font-family="Liberation Mono,monospace" textLength="23" lengthAdjust="spacingAndGlyphs">99999</text><text x="115" y="80.10000000000001" font-size="6" fill="#e0e0e0" text-anchor="end" font-family="Liberation Sans,sans-serif">h</text><text x="157" y="80.10000000000001" font-size="6" fill="#e0e0e0" text-anchor="end" font-family="Liberation Sans,sans-serif">h</text><rect x="161.5" y="72.9" width="17" height="8.7" fill="#d8d8d8" stroke="#f4f4f4" stroke-width=".7"/><text x="170.0" y="79.60000000000001" font-size="5.2" fill="#222" text-anchor="middle" font-family="Liberation Sans,sans-serif">Detail</text><rect x="13.5" y="84.1" width="14" height="9.7" fill="#c4c4c4" stroke="#e8e8e8" stroke-width=".6"/><rect x="28.5" y="83.6" width="131" height="10.7" fill="#000"/><path d="M77 83.1v11.7M118 83.1v11.7" stroke="#9a9a9a"/><text x="52.5" y="91.3" font-size="5.3" font-weight="bold" fill="#f0f0f0" text-anchor="middle" font-family="Liberation Sans,sans-serif">Ambient Temp</text><text x="80" y="92.3" font-size="8" fill="#e8d820" font-family="Liberation Mono,monospace" textLength="23" lengthAdjust="spacingAndGlyphs">99999</text><text x="121" y="92.3" font-size="8" fill="#18a828" font-family="Liberation Mono,monospace" textLength="23" lengthAdjust="spacingAndGlyphs">99999</text><text x="115" y="91.8" font-size="6" fill="#e0e0e0" text-anchor="end" font-family="Liberation Sans,sans-serif">°C</text><text x="157" y="91.8" font-size="6" fill="#e0e0e0" text-anchor="end" font-family="Liberation Sans,sans-serif">°C</text><rect x="161.5" y="84.6" width="17" height="8.7" fill="#d8d8d8" stroke="#f4f4f4" stroke-width=".7"/><text x="170.0" y="91.3" font-size="5.2" fill="#222" text-anchor="middle" font-family="Liberation Sans,sans-serif">Detail</text><rect x="13.5" y="95.8" width="14" height="9.7" fill="#c4c4c4" stroke="#e8e8e8" stroke-width=".6"/><rect x="28.5" y="95.3" width="131" height="10.7" fill="#000"/><path d="M77 94.8v11.7M118 94.8v11.7" stroke="#9a9a9a"/><text x="52.5" y="103.0" font-size="5.3" font-weight="bold" fill="#f0f0f0" text-anchor="middle" font-family="Liberation Sans,sans-serif">Voltage Value</text><text x="80" y="104.0" font-size="8" fill="#e8d820" font-family="Liberation Mono,monospace" textLength="23" lengthAdjust="spacingAndGlyphs">99999</text><text x="121" y="104.0" font-size="8" fill="#18a828" font-family="Liberation Mono,monospace" textLength="23" lengthAdjust="spacingAndGlyphs">99999</text><text x="115" y="103.5" font-size="6" fill="#e0e0e0" text-anchor="end" font-family="Liberation Sans,sans-serif">V</text><text x="157" y="103.5" font-size="6" fill="#e0e0e0" text-anchor="end" font-family="Liberation Sans,sans-serif">V</text><rect x="161.5" y="96.3" width="17" height="8.7" fill="#d8d8d8" stroke="#f4f4f4" stroke-width=".7"/><text x="170.0" y="103.0" font-size="5.2" fill="#222" text-anchor="middle" font-family="Liberation Sans,sans-serif">Detail</text><rect x="1" y="112.5" width="188" height="35.5" fill="#3a3a3a"/><rect x="4" y="115" width="45" height="11" fill="#f08a10" stroke="#f0f0f0" stroke-width=".6"/><text x="26.5" y="123" font-size="5.2" fill="#222" text-anchor="middle" font-family="Liberation Sans,sans-serif">Self-Diagnosis</text><rect x="50" y="115" width="45" height="11" fill="#cfcfcf" stroke="#f0f0f0" stroke-width=".6"/><text x="72.5" y="119.5" font-size="5.2" fill="#222" text-anchor="middle" font-family="Liberation Sans,sans-serif">Inventory</text><text x="72.5" y="125" font-size="5.2" fill="#222" text-anchor="middle" font-family="Liberation Sans,sans-serif">Control</text><rect x="96" y="115" width="45" height="11" fill="#cfcfcf" stroke="#f0f0f0" stroke-width=".6"/><text x="118.5" y="123" font-size="5.2" fill="#222" text-anchor="middle" font-family="Liberation Sans,sans-serif">I/O Test</text><rect x="142" y="115" width="45" height="11" fill="#cfcfcf" stroke="#f0f0f0" stroke-width=".6"/><text x="164.5" y="119.5" font-size="5.2" fill="#222" text-anchor="middle" font-family="Liberation Sans,sans-serif">Periodic</text><text x="164.5" y="125" font-size="5.2" fill="#222" text-anchor="middle" font-family="Liberation Sans,sans-serif">Maintenance</text><rect x="4" y="127" width="45" height="11" fill="#cfcfcf" stroke="#f0f0f0" stroke-width=".6"/><text x="26.5" y="135" font-size="5.2" fill="#222" text-anchor="middle" font-family="Liberation Sans,sans-serif">Replace History</text><rect x="50" y="127" width="45" height="11" fill="#cfcfcf" stroke="#f0f0f0" stroke-width=".6"/><text x="72.5" y="135" font-size="5.2" fill="#222" text-anchor="middle" font-family="Liberation Sans,sans-serif">Time Setting</text><rect x="96" y="127" width="45" height="11" fill="#cfcfcf" stroke="#f0f0f0" stroke-width=".6"/><text x="118.5" y="135" font-size="5.2" fill="#222" text-anchor="middle" font-family="Liberation Sans,sans-serif">Alarm History</text><rect x="142" y="127" width="45" height="11" fill="#cfcfcf" stroke="#f0f0f0" stroke-width=".6"/><text x="164.5" y="131.5" font-size="5.2" fill="#222" text-anchor="middle" font-family="Liberation Sans,sans-serif">Emergency</text><text x="164.5" y="137" font-size="5.2" fill="#222" text-anchor="middle" font-family="Liberation Sans,sans-serif">Phone Number</text></svg>
</div>
<div style="left:1003px;top:579px;width:273px;height:3px;background:#f0f0f0;"></div>
<div style="left:1003px;top:582px;width:270px;height:1px;background:#404040;"></div>
<div style="left:1004px;top:583px;width:253px;height:56px;background:#fff;border-left:1px solid #808080;"></div>
<div style="left:1257px;top:583px;width:15px;height:56px;background:#f0f0f0;"></div>
<svg style="left:1261px;top:589px;" width="7" height="5" viewBox="0 0 7 5"><path d="M0 4.500l3.500-4 3.500 4z" fill="#909090"/></svg>
<svg style="left:1261px;top:627px;" width="7" height="5" viewBox="0 0 7 5"><path d="M0 0.500l3.500 4 3.500-4z" fill="#909090"/></svg>
<div style="left:1004px;top:639px;width:268px;height:15px;background:#f0f0f0;"></div>
<svg style="left:1008px;top:643px;" width="5" height="7" viewBox="0 0 5 7"><path d="M4.500 0l-4 3.500 4 3.500z" fill="#b0b0b0"/></svg>
<svg style="left:1247px;top:643px;" width="5" height="7" viewBox="0 0 5 7"><path d="M0.500 0l4 3.500-4 3.500z" fill="#909090"/></svg>
<div style="left:1003px;top:655px;width:270px;height:1px;background:#404040;"></div>
<svg style="left:1004px;top:656px;" width="110" height="17" viewBox="0 0 110 17"><path d="M0.500 0l5 15.500h35l4-15.500" fill="#f0f0f0" stroke="#000"/><path d="M40.500 15.500l4-15.500M44.500 0l5 15.500h47l5-15.500" fill="#f0f0f0" stroke="#000"/></svg>
<span class="t" style="left:1012px;top:658px;font-size:11px;line-height:14px;color:#000;transform:scaleX(0.8923);">Library</span>
<span class="t" style="left:1056px;top:658px;font-size:11px;line-height:14px;color:#000;transform:scaleX(0.9635);">Template</span>
<!-- status bar -->
<div style="left:0px;top:672px;width:1276px;height:4px;background:#f0f0f0;"></div>
<div style="left:0px;top:676px;width:1276px;height:16px;background:#f0f0f0;"></div>
<span class="t" style="left:2.5px;top:676px;font-size:12px;line-height:16px;color:#000;transform:scaleX(0.8649);">Ready</span>
<div style="left:589px;top:677px;width:71px;height:15px;border:1px solid;border-color:#a0a0a0 #fff #fff #a0a0a0;"></div>
<div style="left:660px;top:677px;width:95px;height:15px;border:1px solid;border-color:#a0a0a0 #fff #fff #a0a0a0;"></div>
<div style="left:755px;top:677px;width:96px;height:15px;border:1px solid;border-color:#a0a0a0 #fff #fff #a0a0a0;"></div>
<div style="left:851px;top:677px;width:129px;height:15px;border:1px solid;border-color:#a0a0a0 #fff #fff #a0a0a0;"></div>
<div style="left:980px;top:677px;width:101px;height:15px;border:1px solid;border-color:#a0a0a0 #fff #fff #a0a0a0;"></div>
<div style="left:1081px;top:677px;width:96px;height:15px;border:1px solid;border-color:#a0a0a0 #fff #fff #a0a0a0;"></div>
<div style="left:1177px;top:677px;width:9px;height:15px;border:1px solid;border-color:#a0a0a0 #fff #fff #a0a0a0;"></div>
<div style="left:1187px;top:677px;width:29px;height:15px;border:1px solid;border-color:#a0a0a0 #fff #fff #a0a0a0;"></div>
<div style="left:1217px;top:677px;width:32px;height:15px;border:1px solid;border-color:#a0a0a0 #fff #fff #a0a0a0;"></div>
<div style="left:1250px;top:677px;width:26px;height:15px;border:1px solid;border-color:#a0a0a0 #fff #fff #a0a0a0;"></div>
<span class="t" style="left:662px;top:676px;font-size:12px;line-height:16px;color:#000;transform:scaleX(0.8641);">X= 232 Y= 353</span>
<span class="t" style="left:757px;top:676px;font-size:12px;line-height:16px;color:#000;transform:scaleX(0.8767);">X= 175 Y= 333</span>
<span class="t" style="left:853px;top:676px;font-size:12px;line-height:16px;color:#000;transform:scaleX(0.8856);">Label</span>
<span class="t" style="left:982px;top:676px;font-size:12px;line-height:16px;color:#000;transform:scaleX(0.9095);">NS15-TX0[]-V2</span>
<span class="t" style="left:1083px;top:676px;font-size:12px;line-height:16px;color:#000;transform:scaleX(0.8843);">System Ver8.1</span>
<!-- taskbar -->
<div style="left:0px;top:692px;width:1276px;height:28px;background:linear-gradient(to right,#56622e 0,#5e6a36 50px,#52602c 100px,#424e24 150px,#4c5232 200px,#3a3d28 260px,#44462e 300px,#4a4530 430px,#6e6048 475px,#5e5038 520px,#3c3626 580px,#3a3424 650px,#4e4432 700px,#5c503a 740px,#3a3828 780px,#2a2c1e 830px,#2c261c 900px,#3a3022 950px,#28221a 1000px,#1a1712 1100px,#14120e 1276px);"></div>
<div style="left:0px;top:692px;width:1276px;height:28px;background:linear-gradient(to bottom,rgba(255,255,255,.22) 0,rgba(255,255,255,.06) 2px,rgba(0,0,0,0) 40%,rgba(0,0,0,.25) 100%);"></div>
<div style="left:0px;top:692px;width:1276px;height:1px;background:#3a3a34;"></div>
<div style="left:120px;top:693px;width:120px;height:27px;background:radial-gradient(ellipse at 40% 60%,rgba(110,120,60,.45),rgba(0,0,0,0) 70%);"></div>
<svg style="left:6px;top:686px;" width="38" height="38" viewBox="0 0 38 38"><defs><radialGradient id="orb" cx="50%" cy="95%" r="95%"><stop offset="0" stop-color="#28d8ff"/><stop offset=".3" stop-color="#1470c0"/><stop offset=".65" stop-color="#1a5ea8"/><stop offset="1" stop-color="#6fa4cc"/></radialGradient><linearGradient id="orbh" x1="0" y1="0" x2="0" y2="1"><stop offset="0" stop-color="#fff" stop-opacity=".75"/><stop offset="1" stop-color="#fff" stop-opacity=".12"/></linearGradient></defs><circle cx="19" cy="19" r="17.500" fill="url(#orb)" stroke="#1d3f66" stroke-width="1"/><circle cx="19" cy="19" r="16.600" fill="none" stroke="#a8cce4" stroke-width=".8"/><path d="M10.500 12.500c3-1.500 5-1.500 7.500 0l-1.500 6c-2.500-1.300-4.500-1.300-7 0z" fill="#f0602c"/><path d="M19.500 13c3 1.500 5 1.500 8 0l-1.500 6c-3 1.500-5 1.500-8 0z" fill="#8cc83c"/><path d="M9 20.500c2.500-1.300 4.500-1.300 7 0l-1.500 6c-2.500-1.300-4.500-1.300-7 0z" fill="#48a8f0"/><path d="M17.500 21c3 1.500 5 1.500 8 0l-1.500 6c-3 1.500-5 1.500-8 0z" fill="#fcc828"/><path d="M2.500 17a16.500 16.500 0 0 1 33 0c-8 4.500-25 4.500-33 0z" fill="url(#orbh)"/></svg>
<div style="left:99px;top:693px;width:41px;height:27px;border-radius:3px;border:1px solid rgba(220,220,200,.75);box-shadow:inset 0 0 0 1px rgba(255,255,255,.25);background:linear-gradient(to bottom,rgba(200,200,170,.55),rgba(120,120,90,.45) 50%,rgba(80,84,56,.5) 52%,rgba(120,122,90,.5));"></div>
<div style="left:229px;top:693px;width:39px;height:27px;border-radius:3px;border:1px solid rgba(220,220,200,.75);box-shadow:inset 0 0 0 1px rgba(255,255,255,.25);background:linear-gradient(to bottom,rgba(210,210,180,.6),rgba(140,140,104,.5) 50%,rgba(90,92,60,.5) 52%,rgba(130,132,96,.5));"></div>
<div style="left:315px;top:693px;width:41px;height:27px;border-radius:3px;border:1px solid rgba(220,220,200,.75);box-shadow:inset 0 0 0 1px rgba(255,255,255,.25);background:linear-gradient(to bottom,rgba(190,190,160,.55),rgba(120,120,88,.45) 50%,rgba(84,84,56,.5) 52%,rgba(120,120,90,.5));"></div>
<div style="left:358px;top:693px;width:41px;height:27px;border-radius:3px;border:1px solid rgba(220,220,200,.75);box-shadow:inset 0 0 0 1px rgba(255,255,255,.25);background:linear-gradient(to bottom,rgba(170,170,160,.55),rgba(96,96,90,.5) 50%,rgba(50,50,46,.6) 52%,rgba(90,90,84,.5));"></div>
<div style="left:401px;top:693px;width:41px;height:27px;border-radius:3px;border:1px solid rgba(220,220,200,.75);box-shadow:inset 0 0 0 1px rgba(255,255,255,.25);background:linear-gradient(to bottom,rgba(240,240,230,.75),rgba(190,190,176,.7) 50%,rgba(150,150,136,.7) 52%,rgba(200,200,188,.7));"></div>
<svg style="left:67px;top:697px;" width="18" height="18" viewBox="0 0 22 22"><circle cx="11" cy="12" r="7.500" fill="none" stroke="#4cb4ec" stroke-width="3.400"/><rect x="6" y="10.500" width="12" height="2.600" fill="#4cb4ec"/><rect x="13" y="13" width="7" height="3" fill="#43482c"/><ellipse cx="11" cy="11" rx="11" ry="4" fill="none" stroke="#f4c838" stroke-width="1.600" transform="rotate(-30 11 11)"/></svg>
<svg style="left:110px;top:697px;" width="20" height="20" viewBox="0 0 20 20"><path d="M2 4h6l1.500 2h8.500v11h-16z" fill="#e8c860" stroke="#b89030"/><rect x="4" y="8" width="12" height="9" fill="#4898e0" stroke="#cfe4f8"/><rect x="7" y="12" width="6" height="5" fill="#e8f0f8"/></svg>
<svg style="left:154px;top:698px;" width="16" height="16" viewBox="0 0 20 20"><circle cx="10" cy="10" r="9" fill="#e84030"/><path d="M10 10L1.500 7A9 9 0 0 0 7 18.500z" fill="#38a850"/><path d="M10 10l-3 8.500A9 9 0 0 0 18.500 7z" fill="#f8c020"/><path d="M10 10l8.500-3A9 9 0 0 0 1.500 7z" fill="#e84030"/><circle cx="10" cy="10" r="4.200" fill="#fff"/><circle cx="10" cy="10" r="3.300" fill="#4080e8"/></svg>
<svg style="left:197px;top:698px;" width="16" height="16" viewBox="0 0 19 19"><rect x="1" y="1" width="17" height="17" rx="2" fill="#4a4a48"/><path d="M5 7l9-3v3.500l-9 3zM14 8.500l-9 3 9 3v-3.500M5 11.500v3.500l9-3" fill="#f89820"/></svg>
<svg style="left:239px;top:698px;" width="20" height="18" viewBox="0 0 20 18"><rect x="1" y="1" width="18" height="9" rx="1" fill="#111" stroke="#f0f0e0"/><path d="M5 3v5M7 3v5M9 3v5M11 3v5M13 3v5M15 3v5" stroke="#f0f0e0" stroke-width="1.200"/><rect x="2" y="12" width="16" height="4" fill="#e8d040" stroke="#111"/></svg>
<svg style="left:283px;top:697px;" width="18" height="20" viewBox="0 0 18 20"><rect x="1.500" y="1.500" width="15" height="11" fill="#182048" stroke="#f0f0f0"/><rect x="3" y="4" width="6" height="6" fill="#cfe4ff"/><rect x="9" y="5" width="5" height="5" fill="#e8501c"/><rect x="3" y="8" width="11" height="3" fill="#2850d8"/><text x="9" y="19" font-size="6.500" font-weight="bold" fill="#fff" text-anchor="middle" font-family="Liberation Sans,sans-serif" stroke="#000" stroke-width=".3">CXD</text></svg>
<svg style="left:412px;top:697px;" width="18" height="20" viewBox="0 0 18 20"><rect x="1.500" y="1.500" width="15" height="11" fill="#182048" stroke="#f0f0f0"/><rect x="3" y="4" width="6" height="6" fill="#cfe4ff"/><rect x="9" y="5" width="5" height="5" fill="#e8501c"/><rect x="3" y="8" width="11" height="3" fill="#2850d8"/><text x="9" y="19" font-size="6.500" font-weight="bold" fill="#fff" text-anchor="middle" font-family="Liberation Sans,sans-serif" stroke="#000" stroke-width=".3">CXD</text></svg>
<svg style="left:327px;top:698px;" width="17" height="17" viewBox="0 0 22 22"><circle cx="10" cy="11" r="9" fill="#f4f4f4" stroke="#888"/><circle cx="10" cy="11" r="6" fill="#d82020"/><circle cx="16" cy="17" r="3.500" fill="#3c8ce0" stroke="#e8f0f8"/></svg>
<svg style="left:368px;top:697px;" width="22" height="20" viewBox="0 0 22 20"><rect x="2" y="2" width="16" height="7" fill="#e8e8e8" stroke="#333"/><path d="M4 4h12M4 6h9" stroke="#335"/><rect x="9" y="8" width="10" height="9" fill="#2858d8" stroke="#cfe0ff"/><rect x="11" y="10" width="5" height="4" fill="#cfe4ff"/></svg>
<svg style="left:1092px;top:704px;" width="9" height="6" viewBox="0 0 9 6"><path d="M0 5.500l4.500-5 4.500 5z" fill="#fff"/></svg>
<svg style="left:1115px;top:700px;" width="9" height="14" viewBox="0 0 11 16"><rect x="3.500" y="0.500" width="4" height="2" fill="#fff"/><rect x="1" y="2" width="9" height="13" rx="1.500" fill="none" stroke="#fff" stroke-width="1.400"/><rect x="3" y="7" width="5" height="6" fill="#fff"/></svg>
<svg style="left:1134px;top:700px;" width="16" height="14" viewBox="0 0 18 16"><path d="M1 5.500h3l4-4v13l-4-4h-3z" fill="#fff"/><path d="M10.500 5a4 4 0 0 1 0 6M13 2.500a7.500 7.500 0 0 1 0 11" fill="none" stroke="#fff" stroke-width="1.300"/></svg>
<span class="t" style="left:1156px;top:698.5px;font-size:8px;line-height:9px;color:#fff;transform:scaleX(0.9368);">73%</span>
<span class="t" style="left:1156px;top:707.5px;font-size:8px;line-height:9px;color:#fff;transform:scaleX(0.9635);">1:26</span>
<svg style="left:1180px;top:700px;" width="17" height="15" viewBox="0 0 20 18"><path d="M2 12h2v2h-2zM5 10h2v4h-2z" fill="#ccc"/><path d="M13 1v16" stroke="#888"/><path d="M11 4l1.500 3 3-2-1 3.500 3.500.5-3 2 2.500 2.500-3.500-.2.300 3.500-2.500-2.500-2 3-.5-3.500-3.500 1 2-3-3-1.500 3.500-1-1.500-3 3 1.200z" fill="#f89c18"/></svg>
<span class="t" style="left:1215px;top:698.5px;font-size:12px;line-height:16px;color:#fff;transform:scaleX(0.8951);">4:01 PM</span>
<div style="left:1266px;top:693px;width:10px;height:27px;border-left:1px solid rgba(255,255,255,.35);background:linear-gradient(to right,rgba(255,255,255,.12),rgba(255,255,255,.03));"></div>
<!-- watermark -->
<svg style="left:0;top:0;pointer-events:none" width="1276" height="720" viewBox="0 0 1276 720"><defs><clipPath id="wmBot"><rect x="0" y="626" width="1276" height="100"/></clipPath><clipPath id="wmTop"><rect x="0" y="500" width="1276" height="126.8"/></clipPath><mask id="wmOut" maskUnits="userSpaceOnUse" x="0" y="500" width="1276" height="220"><g fill="#fff" stroke="#fff" stroke-width="6.0" stroke-linejoin="round" vector-effect="non-scaling-stroke"><text vector-effect='non-scaling-stroke' transform="translate(199.41,671.80) scale(1.2379,1.3944)" font-size="100" font-weight="bold" font-family="Liberation Serif,serif">S</text><text vector-effect='non-scaling-stroke' transform="translate(278.80,671.80) scale(0.9939,1.3944)" font-size="100" font-weight="bold" font-family="Liberation Serif,serif">E</text><text vector-effect='non-scaling-stroke' transform="translate(351.98,671.80) scale(1.0495,1.3944)" font-size="100" font-weight="bold" font-family="Liberation Serif,serif">A</text><text vector-effect='non-scaling-stroke' transform="translate(434.35,671.80) scale(1.0531,1.3944)" font-size="100" font-weight="bold" font-family="Liberation Serif,serif">T</text><text vector-effect='non-scaling-stroke' transform="translate(515.13,671.80) scale(1.0926,1.3944)" font-size="100" font-weight="bold" font-family="Liberation Serif,serif">R</text><text vector-effect='non-scaling-stroke' transform="translate(609.02,671.80) scale(1.0070,1.3944)" font-size="100" font-weight="bold" font-family="Liberation Serif,serif">A</text><text vector-effect='non-scaling-stroke' transform="translate(683.35,671.80) scale(1.0550,1.3944)" font-size="100" font-weight="bold" font-family="Liberation Serif,serif">C</text><text vector-effect='non-scaling-stroke' transform="translate(768.16,671.80) scale(1.0758,1.3944)" font-size="100" font-weight="bold" font-family="Liberation Serif,serif">K</text><text vector-effect='non-scaling-stroke' transform="translate(865.34,671.80) scale(0.9689,1.3944)" font-size="100" font-weight="bold" font-family="Liberation Serif,serif">E</text><text vector-effect='non-scaling-stroke' transform="translate(943.13,671.80) scale(1.0926,1.3944)" font-size="100" font-weight="bold" font-family="Liberation Serif,serif">R</text><text vector-effect='non-scaling-stroke' transform="translate(1034.77,670.99) scale(1.4188,1.4188)" font-size="100" font-weight="bold" font-family="Liberation Serif,serif">.</text><text vector-effect='non-scaling-stroke' transform="translate(1074.62,671.80) scale(1.0996,1.3944)" font-size="100" font-weight="bold" font-family="Liberation Serif,serif">R</text><text vector-effect='non-scaling-stroke' transform="translate(1166.28,671.80) scale(1.0932,1.3944)" font-size="100" font-weight="bold" font-family="Liberation Serif,serif">U</text><text vector-effect='non-scaling-stroke' transform="translate(204.41,671.80) scale(1.2379,1.3944)" font-size="100" font-weight="bold" font-family="Liberation Serif,serif">S</text><text vector-effect='non-scaling-stroke' transform="translate(283.80,671.80) scale(0.9939,1.3944)" font-size="100" font-weight="bold" font-family="Liberation Serif,serif">E</text><text vector-effect='non-scaling-stroke' transform="translate(356.98,671.80) scale(1.0495,1.3944)" font-size="100" font-weight="bold" font-family="Liberation Serif,serif">A</text><text vector-effect='non-scaling-stroke' transform="translate(439.35,671.80) scale(1.0531,1.3944)" font-size="100" font-weight="bold" font-family="Liberation Serif,serif">T</text><text vector-effect='non-scaling-stroke' transform="translate(520.13,671.80) scale(1.0926,1.3944)" font-size="100" font-weight="bold" font-family="Liberation Serif,serif">R</text><text vector-effect='non-scaling-stroke' transform="translate(614.02,671.80) scale(1.0070,1.3944)" font-size="100" font-weight="bold" font-family="Liberation Serif,serif">A</text><text vector-effect='non-scaling-stroke' transform="translate(688.35,671.80) scale(1.0550,1.3944)" font-size="100" font-weight="bold" font-family="Liberation Serif,serif">C</text><text vector-effect='non-scaling-stroke' transform="translate(773.16,671.80) scale(1.0758,1.3944)" font-size="100" font-weight="bold" font-family="Liberation Serif,serif">K</text><text vector-effect='non-scaling-stroke' transform="translate(870.34,671.80) scale(0.9689,1.3944)" font-size="100" font-weight="bold" font-family="Liberation Serif,serif">E</text><text vector-effect='non-scaling-stroke' transform="translate(948.13,671.80) scale(1.0926,1.3944)" font-size="100" font-weight="bold" font-family="Liberation Serif,serif">R</text><text vector-effect='non-scaling-stroke' transform="translate(1034.77,670.99) scale(1.4188,1.4188)" font-size="100" font-weight="bold" font-family="Liberation Serif,serif">.</text><text vector-effect='non-scaling-stroke' transform="translate(1079.62,671.80) scale(1.0996,1.3944)" font-size="100" font-weight="bold" font-family="Liberation Serif,serif">R</text><text vector-effect='non-scaling-stroke' transform="translate(1171.28,671.80) scale(1.0932,1.3944)" font-size="100" font-weight="bold" font-family="Liberation Serif,serif">U</text><text vector-effect='non-scaling-stroke' transform="translate(209.41,671.80) scale(1.2379,1.3944)" font-size="100" font-weight="bold" font-family="Liberation Serif,serif">S</text><text vector-effect='non-scaling-stroke' transform="translate(288.80,671.80) scale(0.9939,1.3944)" font-size="100" font-weight="bold" font-family="Liberation Serif,serif">E</text><text vector-effect='non-scaling-stroke' transform="translate(361.98,671.80) scale(1.0495,1.3944)" font-size="100" font-weight="bold" font-family="Liberation Serif,serif">A</text><text vector-effect='non-scaling-stroke' transform="translate(444.35,671.80) scale(1.0531,1.3944)" font-size="100" font-weight="bold" font-family="Liberation Serif,serif">T</text><text vector-effect='non-scaling-stroke' transform="translate(525.13,671.80) scale(1.0926,1.3944)" font-size="100" font-weight="bold" font-family="Liberation Serif,serif">R</text><text vector-effect='non-scaling-stroke' transform="translate(619.02,671.80) scale(1.0070,1.3944)" font-size="100" font-weight="bold" font-family="Liberation Serif,serif">A</text><text vector-effect='non-scaling-stroke' transform="translate(693.35,671.80) scale(1.0550,1.3944)" font-size="100" font-weight="bold" font-family="Liberation Serif,serif">C</text><text vector-effect='non-scaling-stroke' transform="translate(778.16,671.80) scale(1.0758,1.3944)" font-size="100" font-weight="bold" font-family="Liberation Serif,serif">K</text><text vector-effect='non-scaling-stroke' transform="translate(875.34,671.80) scale(0.9689,1.3944)" font-size="100" font-weight="bold" font-family="Liberation Serif,serif">E</text><text vector-effect='non-scaling-stroke' transform="translate(953.13,671.80) scale(1.0926,1.3944)" font-size="100" font-weight="bold" font-family="Liberation Serif,serif">R</text><text vector-effect='non-scaling-stroke' transform="translate(1034.77,670.99) scale(1.4188,1.4188)" font-size="100" font-weight="bold" font-family="Liberation Serif,serif">.</text><text vector-effect='non-scaling-stroke' transform="translate(1084.62,671.80) scale(1.0996,1.3944)" font-size="100" font-weight="bold" font-family="Liberation Serif,serif">R</text><text vector-effect='non-scaling-stroke' transform="translate(1176.28,671.80) scale(1.0932,1.3944)" font-size="100" font-weight="bold" font-family="Liberation Serif,serif">U</text></g><g fill="#000" stroke="#000" stroke-width="1.7999999999999998" stroke-linejoin="round"><text vector-effect='non-scaling-stroke' transform="translate(199.41,671.80) scale(1.2379,1.3944)" font-size="100" font-weight="bold" font-family="Liberation Serif,serif">S</text><text vector-effect='non-scaling-stroke' transform="translate(278.80,671.80) scale(0.9939,1.3944)" font-size="100" font-weight="bold" font-family="Liberation Serif,serif">E</text><text vector-effect='non-scaling-stroke' transform="translate(351.98,671.80) scale(1.0495,1.3944)" font-size="100" font-weight="bold" font-family="Liberation Serif,serif">A</text><text vector-effect='non-scaling-stroke' transform="translate(434.35,671.80) scale(1.0531,1.3944)" font-size="100" font-weight="bold" font-family="Liberation Serif,serif">T</text><text vector-effect='non-scaling-stroke' transform="translate(515.13,671.80) scale(1.0926,1.3944)" font-size="100" font-weight="bold" font-family="Liberation Serif,serif">R</text><text vector-effect='non-scaling-stroke' transform="translate(609.02,671.80) scale(1.0070,1.3944)" font-size="100" font-weight="bold" font-family="Liberation Serif,serif">A</text><text vector-effect='non-scaling-stroke' transform="translate(683.35,671.80) scale(1.0550,1.3944)" font-size="100" font-weight="bold" font-family="Liberation Serif,serif">C</text><text vector-effect='non-scaling-stroke' transform="translate(768.16,671.80) scale(1.0758,1.3944)" font-size="100" font-weight="bold" font-family="Liberation Serif,serif">K</text><text vector-effect='non-scaling-stroke' transform="translate(865.34,671.80) scale(0.9689,1.3944)" font-size="100" font-weight="bold" font-family="Liberation Serif,serif">E</text><text vector-effect='non-scaling-stroke' transform="translate(943.13,671.80) scale(1.0926,1.3944)" font-size="100" font-weight="bold" font-family="Liberation Serif,serif">R</text><text vector-effect='non-scaling-stroke' transform="translate(1034.77,670.99) scale(1.4188,1.4188)" font-size="100" font-weight="bold" font-family="Liberation Serif,serif">.</text><text vector-effect='non-scaling-stroke' transform="translate(1074.62,671.80) scale(1.0996,1.3944)" font-size="100" font-weight="bold" font-family="Liberation Serif,serif">R</text><text vector-effect='non-scaling-stroke' transform="translate(1166.28,671.80) scale(1.0932,1.3944)" font-size="100" font-weight="bold" font-family="Liberation Serif,serif">U</text><text vector-effect='non-scaling-stroke' transform="translate(204.41,671.80) scale(1.2379,1.3944)" font-size="100" font-weight="bold" font-family="Liberation Serif,serif">S</text><text vector-effect='non-scaling-stroke' transform="translate(283.80,671.80) scale(0.9939,1.3944)" font-size="100" font-weight="bold" font-family="Liberation Serif,serif">E</text><text vector-effect='non-scaling-stroke' transform="translate(356.98,671.80) scale(1.0495,1.3944)" font-size="100" font-weight="bold" font-family="Liberation Serif,serif">A</text><text vector-effect='non-scaling-stroke' transform="translate(439.35,671.80) scale(1.0531,1.3944)" font-size="100" font-weight="bold" font-family="Liberation Serif,serif">T</text><text vector-effect='non-scaling-stroke' transform="translate(520.13,671.80) scale(1.0926,1.3944)" font-size="100" font-weight="bold" font-family="Liberation Serif,serif">R</text><text vector-effect='non-scaling-stroke' transform="translate(614.02,671.80) scale(1.0070,1.3944)" font-size="100" font-weight="bold" font-family="Liberation Serif,serif">A</text><text vector-effect='non-scaling-stroke' transform="translate(688.35,671.80) scale(1.0550,1.3944)" font-size="100" font-weight="bold" font-family="Liberation Serif,serif">C</text><text vector-effect='non-scaling-stroke' transform="translate(773.16,671.80) scale(1.0758,1.3944)" font-size="100" font-weight="bold" font-family="Liberation Serif,serif">K</text><text vector-effect='non-scaling-stroke' transform="translate(870.34,671.80) scale(0.9689,1.3944)" font-size="100" font-weight="bold" font-family="Liberation Serif,serif">E</text><text vector-effect='non-scaling-stroke' transform="translate(948.13,671.80) scale(1.0926,1.3944)" font-size="100" font-weight="bold" font-family="Liberation Serif,serif">R</text><text vector-effect='non-scaling-stroke' transform="translate(1034.77,670.99) scale(1.4188,1.4188)" font-size="100" font-weight="bold" font-family="Liberation Serif,serif">.</text><text vector-effect='non-scaling-stroke' transform="translate(1079.62,671.80) scale(1.0996,1.3944)" font-size="100" font-weight="bold" font-family="Liberation Serif,serif">R</text><text vector-effect='non-scaling-stroke' transform="translate(1171.28,671.80) scale(1.0932,1.3944)" font-size="100" font-weight="bold" font-family="Liberation Serif,serif">U</text><text vector-effect='non-scaling-stroke' transform="translate(209.41,671.80) scale(1.2379,1.3944)" font-size="100" font-weight="bold" font-family="Liberation Serif,serif">S</text><text vector-effect='non-scaling-stroke' transform="translate(288.80,671.80) scale(0.9939,1.3944)" font-size="100" font-weight="bold" font-family="Liberation Serif,serif">E</text><text vector-effect='non-scaling-stroke' transform="translate(361.98,671.80) scale(1.0495,1.3944)" font-size="100" font-weight="bold" font-family="Liberation Serif,serif">A</text><text vector-effect='non-scaling-stroke' transform="translate(444.35,671.80) scale(1.0531,1.3944)" font-size="100" font-weight="bold" font-family="Liberation Serif,serif">T</text><text vector-effect='non-scaling-stroke' transform="translate(525.13,671.80) scale(1.0926,1.3944)" font-size="100" font-weight="bold" font-family="Liberation Serif,serif">R</text><text vector-effect='non-scaling-stroke' transform="translate(619.02,671.80) scale(1.0070,1.3944)" font-size="100" font-weight="bold" font-family="Liberation Serif,serif">A</text><text vector-effect='non-scaling-stroke' transform="translate(693.35,671.80) scale(1.0550,1.3944)" font-size="100" font-weight="bold" font-family="Liberation Serif,serif">C</text><text vector-effect='non-scaling-stroke' transform="translate(778.16,671.80) scale(1.0758,1.3944)" font-size="100" font-weight="bold" font-family="Liberation Serif,serif">K</text><text vector-effect='non-scaling-stroke' transform="translate(875.34,671.80) scale(0.9689,1.3944)" font-size="100" font-weight="bold" font-family="Liberation Serif,serif">E</text><text vector-effect='non-scaling-stroke' transform="translate(953.13,671.80) scale(1.0926,1.3944)" font-size="100" font-weight="bold" font-family="Liberation Serif,serif">R</text><text vector-effect='non-scaling-stroke' transform="translate(1034.77,670.99) scale(1.4188,1.4188)" font-size="100" font-weight="bold" font-family="Liberation Serif,serif">.</text><text vector-effect='non-scaling-stroke' transform="translate(1084.62,671.80) scale(1.0996,1.3944)" font-size="100" font-weight="bold" font-family="Liberation Serif,serif">R</text><text vector-effect='non-scaling-stroke' transform="translate(1176.28,671.80) scale(1.0932,1.3944)" font-size="100" font-weight="bold" font-family="Liberation Serif,serif">U</text></g></mask></defs><g opacity="0.62" fill="#0671ac"><path d="M93.0 534.8L84.6 573.5L64.7 539.3L68.7 578.6L39.2 552.3L55.2 588.5L19.0 572.5L45.3 602.0L6.0 598.0L40.2 617.9L1.5 626.3L40.2 634.7L6.0 654.6L45.3 650.6L19.0 680.1L55.2 664.1L39.2 700.3L68.7 674.0L64.7 713.3L84.6 679.1L93.0 717.8L101.4 679.1L121.3 713.3L117.3 674.0L146.8 700.3L130.8 664.1L167.0 680.1L140.7 650.6L180.0 654.6L145.8 634.7L184.5 626.3L145.8 617.9L180.0 598.0L140.7 602.0L167.0 572.5L130.8 588.5L146.8 552.3L117.3 578.6L121.3 539.3L101.4 573.5ZM43.5 626.3A49.5 49.5 0 0 1 142.5 626.3Z" fill-rule="evenodd" transform="translate(93 0) scale(1.025 1) translate(-93 0)"/><g clip-path="url(#wmBot)" stroke="#0671ac" stroke-width="6.0" stroke-linejoin="round"><text vector-effect='non-scaling-stroke' transform="translate(199.41,671.80) scale(1.2379,1.3944)" font-size="100" font-weight="bold" font-family="Liberation Serif,serif">S</text><text vector-effect='non-scaling-stroke' transform="translate(278.80,671.80) scale(0.9939,1.3944)" font-size="100" font-weight="bold" font-family="Liberation Serif,serif">E</text><text vector-effect='non-scaling-stroke' transform="translate(351.98,671.80) scale(1.0495,1.3944)" font-size="100" font-weight="bold" font-family="Liberation Serif,serif">A</text><text vector-effect='non-scaling-stroke' transform="translate(434.35,671.80) scale(1.0531,1.3944)" font-size="100" font-weight="bold" font-family="Liberation Serif,serif">T</text><text vector-effect='non-scaling-stroke' transform="translate(515.13,671.80) scale(1.0926,1.3944)" font-size="100" font-weight="bold" font-family="Liberation Serif,serif">R</text><text vector-effect='non-scaling-stroke' transform="translate(609.02,671.80) scale(1.0070,1.3944)" font-size="100" font-weight="bold" font-family="Liberation Serif,serif">A</text><text vector-effect='non-scaling-stroke' transform="translate(683.35,671.80) scale(1.0550,1.3944)" font-size="100" font-weight="bold" font-family="Liberation Serif,serif">C</text><text vector-effect='non-scaling-stroke' transform="translate(768.16,671.80) scale(1.0758,1.3944)" font-size="100" font-weight="bold" font-family="Liberation Serif,serif">K</text><text vector-effect='non-scaling-stroke' transform="translate(865.34,671.80) scale(0.9689,1.3944)" font-size="100" font-weight="bold" font-family="Liberation Serif,serif">E</text><text vector-effect='non-scaling-stroke' transform="translate(943.13,671.80) scale(1.0926,1.3944)" font-size="100" font-weight="bold" font-family="Liberation Serif,serif">R</text><text vector-effect='non-scaling-stroke' transform="translate(1034.77,670.99) scale(1.4188,1.4188)" font-size="100" font-weight="bold" font-family="Liberation Serif,serif">.</text><text vector-effect='non-scaling-stroke' transform="translate(1074.62,671.80) scale(1.0996,1.3944)" font-size="100" font-weight="bold" font-family="Liberation Serif,serif">R</text><text vector-effect='non-scaling-stroke' transform="translate(1166.28,671.80) scale(1.0932,1.3944)" font-size="100" font-weight="bold" font-family="Liberation Serif,serif">U</text><text vector-effect='non-scaling-stroke' transform="translate(204.41,671.80) scale(1.2379,1.3944)" font-size="100" font-weight="bold" font-family="Liberation Serif,serif">S</text><text vector-effect='non-scaling-stroke' transform="translate(283.80,671.80) scale(0.9939,1.3944)" font-size="100" font-weight="bold" font-family="Liberation Serif,serif">E</text><text vector-effect='non-scaling-stroke' transform="translate(356.98,671.80) scale(1.0495,1.3944)" font-size="100" font-weight="bold" font-family="Liberation Serif,serif">A</text><text vector-effect='non-scaling-stroke' transform="translate(439.35,671.80) scale(1.0531,1.3944)" font-size="100" font-weight="bold" font-family="Liberation Serif,serif">T</text><text vector-effect='non-scaling-stroke' transform="translate(520.13,671.80) scale(1.0926,1.3944)" font-size="100" font-weight="bold" font-family="Liberation Serif,serif">R</text><text vector-effect='non-scaling-stroke' transform="translate(614.02,671.80) scale(1.0070,1.3944)" font-size="100" font-weight="bold" font-family="Liberation Serif,serif">A</text><text vector-effect='non-scaling-stroke' transform="translate(688.35,671.80) scale(1.0550,1.3944)" font-size="100" font-weight="bold" font-family="Liberation Serif,serif">C</text><text vector-effect='non-scaling-stroke' transform="translate(773.16,671.80) scale(1.0758,1.3944)" font-size="100" font-weight="bold" font-family="Liberation Serif,serif">K</text><text vector-effect='non-scaling-stroke' transform="translate(870.34,671.80) scale(0.9689,1.3944)" font-size="100" font-weight="bold" font-family="Liberation Serif,serif">E</text><text vector-effect='non-scaling-stroke' transform="translate(948.13,671.80) scale(1.0926,1.3944)" font-size="100" font-weight="bold" font-family="Liberation Serif,serif">R</text><text vector-effect='non-scaling-stroke' transform="translate(1034.77,670.99) scale(1.4188,1.4188)" font-size="100" font-weight="bold" font-family="Liberation Serif,serif">.</text><text vector-effect='non-scaling-stroke' transform="translate(1079.62,671.80) scale(1.0996,1.3944)" font-size="100" font-weight="bold" font-family="Liberation Serif,serif">R</text><text vector-effect='non-scaling-stroke' transform="translate(1171.28,671.80) scale(1.0932,1.3944)" font-size="100" font-weight="bold" font-family="Liberation Serif,serif">U</text><text vector-effect='non-scaling-stroke' transform="translate(209.41,671.80) scale(1.2379,1.3944)" font-size="100" font-weight="bold" font-family="Liberation Serif,serif">S</text><text vector-effect='non-scaling-stroke' transform="translate(288.80,671.80) scale(0.9939,1.3944)" font-size="100" font-weight="bold" font-family="Liberation Serif,serif">E</text><text vector-effect='non-scaling-stroke' transform="translate(361.98,671.80) scale(1.0495,1.3944)" font-size="100" font-weight="bold" font-family="Liberation Serif,serif">A</text><text vector-effect='non-scaling-stroke' transform="translate(444.35,671.80) scale(1.0531,1.3944)" font-size="100" font-weight="bold" font-family="Liberation Serif,serif">T</text><text vector-effect='non-scaling-stroke' transform="translate(525.13,671.80) scale(1.0926,1.3944)" font-size="100" font-weight="bold" font-family="Liberation Serif,serif">R</text><text vector-effect='non-scaling-stroke' transform="translate(619.02,671.80) scale(1.0070,1.3944)" font-size="100" font-weight="bold" font-family="Liberation Serif,serif">A</text><text vector-effect='non-scaling-stroke' transform="translate(693.35,671.80) scale(1.0550,1.3944)" font-size="100" font-weight="bold" font-family="Liberation Serif,serif">C</text><text vector-effect='non-scaling-stroke' transform="translate(778.16,671.80) scale(1.0758,1.3944)" font-size="100" font-weight="bold" font-family="Liberation Serif,serif">K</text><text vector-effect='non-scaling-stroke' transform="translate(875.34,671.80) scale(0.9689,1.3944)" font-size="100" font-weight="bold" font-family="Liberation Serif,serif">E</text><text vector-effect='non-scaling-stroke' transform="translate(953.13,671.80) scale(1.0926,1.3944)" font-size="100" font-weight="bold" font-family="Liberation Serif,serif">R</text><text vector-effect='non-scaling-stroke' transform="translate(1034.77,670.99) scale(1.4188,1.4188)" font-size="100" font-weight="bold" font-family="Liberation Serif,serif">.</text><text vector-effect='non-scaling-stroke' transform="translate(1084.62,671.80) scale(1.0996,1.3944)" font-size="100" font-weight="bold" font-family="Liberation Serif,serif">R</text><text vector-effect='non-scaling-stroke' transform="translate(1176.28,671.80) scale(1.0932,1.3944)" font-size="100" font-weight="bold" font-family="Liberation Serif,serif">U</text></g><g clip-path="url(#wmTop)"><rect x="190" y="560" width="1086" height="70" mask="url(#wmOut)"/></g></g></svg>
</body></html>
